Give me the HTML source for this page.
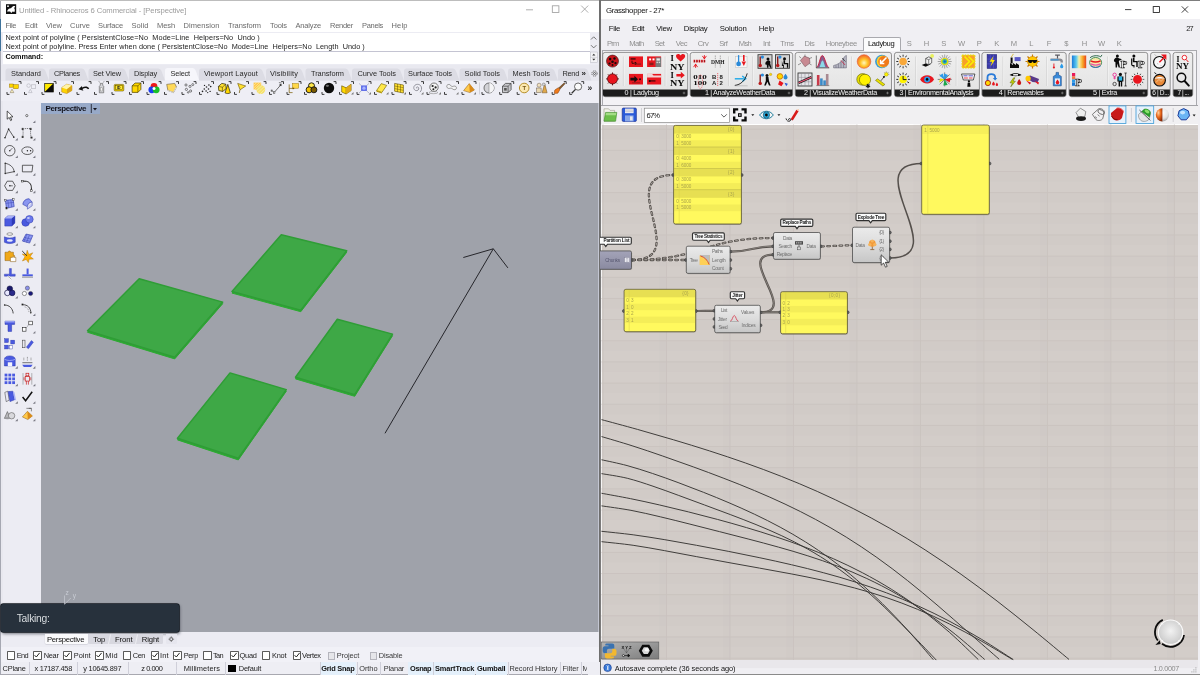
<!DOCTYPE html><html><head><meta charset="utf-8"><title>Rhino + Grasshopper</title><style>
html,body{margin:0;padding:0;}
body{width:1200px;height:675px;overflow:hidden;background:#fff;font-family:"Liberation Sans",sans-serif;position:relative;}
.a{position:absolute;z-index:1;}
.t{position:absolute;white-space:pre;line-height:1;z-index:3;}
svg{position:absolute;overflow:visible;z-index:2;}

</style></head><body>
<div class="a" id="rhino" style="will-change:transform;left:0;top:0;width:600px;height:675px;background:#fff;overflow:hidden;">
<div class="a" style="left:0px;top:0px;width:600px;height:1px;background:#bdbdbd;"></div>
<div class="t" style="left:19px;top:7px;font-size:7.7px;color:#9c9c9c;letter-spacing:-0.108px;">Untitled - Rhinoceros 6 Commercial - [Perspective]</div>
<div class="t" style="left:5.5px;top:22px;font-size:7.5px;color:#6b6b6b;letter-spacing:-0.396px;">File</div>
<div class="t" style="left:25px;top:22px;font-size:7.5px;color:#6b6b6b;letter-spacing:-0.106px;">Edit</div>
<div class="t" style="left:46px;top:22px;font-size:7.5px;color:#6b6b6b;letter-spacing:-0.030px;">View</div>
<div class="t" style="left:70px;top:22px;font-size:7.5px;color:#6b6b6b;letter-spacing:-0.001px;">Curve</div>
<div class="t" style="left:98px;top:22px;font-size:7.5px;color:#6b6b6b;letter-spacing:-0.121px;">Surface</div>
<div class="t" style="left:131.5px;top:22px;font-size:7.5px;color:#6b6b6b;letter-spacing:0.065px;">Solid</div>
<div class="t" style="left:157px;top:22px;font-size:7.5px;color:#6b6b6b;letter-spacing:-0.085px;">Mesh</div>
<div class="t" style="left:183.5px;top:22px;font-size:7.5px;color:#6b6b6b;letter-spacing:0.063px;">Dimension</div>
<div class="t" style="left:228px;top:22px;font-size:7.5px;color:#6b6b6b;letter-spacing:-0.099px;">Transform</div>
<div class="t" style="left:270px;top:22px;font-size:7.5px;color:#6b6b6b;letter-spacing:-0.102px;">Tools</div>
<div class="t" style="left:295.5px;top:22px;font-size:7.5px;color:#6b6b6b;letter-spacing:-0.169px;">Analyze</div>
<div class="t" style="left:330px;top:22px;font-size:7.5px;color:#6b6b6b;letter-spacing:-0.266px;">Render</div>
<div class="t" style="left:362px;top:22px;font-size:7.5px;color:#6b6b6b;letter-spacing:-0.322px;">Panels</div>
<div class="t" style="left:391.5px;top:22px;font-size:7.5px;color:#6b6b6b;letter-spacing:0.144px;">Help</div>
<div class="a" style="left:0px;top:32px;width:600px;height:33px;background:#ececf3;"></div>
<div class="a" style="left:3px;top:33px;width:587px;height:17.5px;background:#fff;"></div>
<div class="a" style="left:3px;top:50.5px;width:587px;height:1px;background:#c4c4d2;"></div>
<div class="a" style="left:3px;top:51.5px;width:587px;height:12px;background:#fff;"></div>
<div class="t" style="left:5.5px;top:34px;font-size:7.3px;color:#1c1c1c;letter-spacing:0.086px;">Next point of polyline ( PersistentClose=No  Mode=Line  Helpers=No  Undo )</div>
<div class="t" style="left:5.5px;top:43px;font-size:7.3px;color:#1c1c1c;letter-spacing:0.048px;">Next point of polyline. Press Enter when done ( PersistentClose=No  Mode=Line  Helpers=No  Length  Undo )</div>
<div class="t" style="left:5.5px;top:53px;font-size:7.3px;color:#111;font-weight:bold;letter-spacing:-0.078px;">Command:</div>
<div class="a" style="left:0px;top:65px;width:600px;height:16px;background:#e9e9f0;"></div>
<div class="a" style="left:0px;top:80.5px;width:600px;height:22px;background:#eeeef5;"></div>
<div class="a" style="left:0px;top:101px;width:41px;height:531px;background:#ececf3;"></div>
<div class="a" style="left:0px;top:101px;width:3px;height:531px;background:#e8e8ef;"></div>
<div class="a" style="left:41px;top:102.5px;width:556.8px;height:529.5px;background:#9fa2aa;"></div>
<div class="a" style="left:597.8px;top:102.5px;width:1.2px;height:529.5px;background:#c3c6d2;"></div>
<div class="a" style="left:41px;top:102.5px;width:59px;height:11.5px;background:#97a9c8;"></div>
<div class="t" style="left:45.5px;top:105px;font-size:8px;color:#15151f;font-weight:bold;letter-spacing:-0.402px;">Perspective</div>
<div class="a" style="left:0px;top:632px;width:600px;height:15px;background:#ececf3;"></div>
<div class="a" style="left:0px;top:647px;width:600px;height:14.5px;background:#f1f1f7;"></div>
<div class="a" style="left:0px;top:661.5px;width:600px;height:13.5px;background:#eeeef4;"></div>
<div class="a" style="left:599px;top:0px;width:1px;height:675px;background:#6e6e6e;"></div>
<div class="a" style="left:0px;top:674px;width:599px;height:1px;background:#a8a8b0;"></div>
<div class="a" style="left:0px;top:1px;width:1px;height:674px;background:#a6a8b2;"></div>
<div class="a" style="left:0px;top:19px;width:1.2px;height:32px;background:#3f739b;"></div>
<svg width="600" height="675" viewBox="0 0 600 675" style="left:0;top:0;">
<g stroke="#9a9a9a" stroke-width=".8" fill="none"><path d="M526 9.8h7"/><rect x="552.3" y="5.8" width="6.6" height="6.6"/><path d="M581.2 5.6l7 7M588.2 5.6l-7 7"/></g>
<g><rect x="6" y="4.2" width="10.2" height="9.8" fill="#111"/><path d="M7 11.5c1-2.5 2.5-3.5 4-3.2 1.5-2.3 3-2.6 4.2-2.2l-1 2.2c.8 1 .8 2.4.2 3.6l-1.8-.4-1.3 1.6-1.2-1.5z" fill="#fff"/><circle cx="8" cy="6.2" r=".9" fill="#fff"/></g>
<g stroke="#555" stroke-width=".8" fill="none"><path d="M591 39.5l2.7-2.7 2.7 2.7M591 45.2l2.7 2.7 2.7-2.7"/></g>
<g><rect x="590.3" y="52" width="7" height="10.6" fill="#f3f3f6" stroke="#b8b8c2" stroke-width=".5"/><path d="M592.2 55.6l1.6-1.8 1.6 1.8zM592.2 58.8l1.6 1.8 1.6-1.8z" fill="#333"/><path d="M590.3 57.3h7" stroke="#b8b8c2" stroke-width=".5"/></g>
<path d="M5.5 80.5 V71.0 Q5.5 68.5 8.0 68.5 H42.5 Q44.5 68.5 45.5 71.0 L49.0 80.5 Z" fill="#dcdce4"/>
<path d="M49 80.5 V71.0 Q49 68.5 51.5 68.5 H82 Q84 68.5 85 71.0 L88.5 80.5 Z" fill="#dcdce4"/>
<path d="M88.5 80.5 V71.0 Q88.5 68.5 91.0 68.5 H122.5 Q124.5 68.5 125.5 71.0 L129.0 80.5 Z" fill="#dcdce4"/>
<path d="M129 80.5 V71.0 Q129 68.5 131.5 68.5 H158.5 Q160.5 68.5 161.5 71.0 L165.0 80.5 Z" fill="#dcdce4"/>
<path d="M165 80.5 V70.5 Q165 68 167.5 68 H192.7 Q194.7 68 195.7 70.5 L199.2 80.5 Z" fill="#f6f6fb"/>
<path d="M199 80.5 V71.0 Q199 68.5 201.5 68.5 H259.5 Q261.5 68.5 262.5 71.0 L266.0 80.5 Z" fill="#dcdce4"/>
<path d="M266 80.5 V71.0 Q266 68.5 268.5 68.5 H299 Q301 68.5 302 71.0 L305.5 80.5 Z" fill="#dcdce4"/>
<path d="M305.5 80.5 V71.0 Q305.5 68.5 308.0 68.5 H345.5 Q347.5 68.5 348.5 71.0 L352.0 80.5 Z" fill="#dcdce4"/>
<path d="M352 80.5 V71.0 Q352 68.5 354.5 68.5 H397.5 Q399.5 68.5 400.5 71.0 L404.0 80.5 Z" fill="#dcdce4"/>
<path d="M404 80.5 V71.0 Q404 68.5 406.5 68.5 H453 Q455 68.5 456 71.0 L459.5 80.5 Z" fill="#dcdce4"/>
<path d="M459.5 80.5 V71.0 Q459.5 68.5 462.0 68.5 H501.5 Q503.5 68.5 504.5 71.0 L508.0 80.5 Z" fill="#dcdce4"/>
<path d="M508 80.5 V71.0 Q508 68.5 510.5 68.5 H551.5 Q553.5 68.5 554.5 71.0 L558.0 80.5 Z" fill="#dcdce4"/>
<path d="M558 80.5 V71.0 Q558 68.5 560.5 68.5 H585 Q587 68.5 588 71.0 L591.5 80.5 Z" fill="#dcdce4"/>
<g fill="none" stroke="#555" stroke-width=".9"><circle cx="594.5" cy="73.5" r="2.6" stroke-dasharray="1.3 .8"/><circle cx="594.5" cy="73.5" r="1"/></g>
<path d="M91.3 104v9" stroke="#15151f" stroke-width=".8"/><path d="M93 108h4l-2 2.6z" fill="#15151f"/>
<g stroke="#555" stroke-width=".7" fill="none"><path d="M168.5 639.2h5.6M171.3 636.4v5.6"/><rect x="170" y="637.9" width="2.6" height="2.6" fill="#e6e6ee"/></g>
<g stroke="#f4f4f8" stroke-width=".8"><path d="M110.500 634.500l-2 9.500M137.500 634.500l-2 9.500"/></g>
<g stroke="#c9ccd4" stroke-width=".7" fill="none"><path d="M64.5 595.5v9M64.8 604l6-6"/></g>
<text x="65.5" y="594.5" font-size="6.5" fill="#c9ccd4">z</text><text x="72.8" y="597.5" font-size="6.5" fill="#c9ccd4">y</text>
<path d="M139.2 280.3 L222.7 303.70000000000005 L174.7 358.90000000000003 L87.5 332.3 Z" fill="#2cab31" stroke="#2cab31" stroke-width="1" stroke-linejoin="round"/>
<path d="M139.2 278.7 L222.7 302.1 L174.7 357.3 L87.5 330.7 Z" fill="#3ea846" stroke="#2f9d36" stroke-width="1.5" stroke-linejoin="round"/>
<path d="M281.3 236.29999999999998 L346.7 252.29999999999998 L300.8 311.70000000000005 L232 293.1 Z" fill="#2cab31" stroke="#2cab31" stroke-width="1" stroke-linejoin="round"/>
<path d="M281.3 234.7 L346.7 250.7 L300.8 310.1 L232 291.5 Z" fill="#3ea846" stroke="#2f9d36" stroke-width="1.5" stroke-linejoin="round"/>
<path d="M337.3 320.8 L392.5 335.70000000000005 L354.7 396.3 L295.5 378.90000000000003 Z" fill="#2cab31" stroke="#2cab31" stroke-width="1" stroke-linejoin="round"/>
<path d="M337.3 319.2 L392.5 334.1 L354.7 394.7 L295.5 377.3 Z" fill="#3ea846" stroke="#2f9d36" stroke-width="1.5" stroke-linejoin="round"/>
<path d="M230 374.5 L286.3 391.20000000000005 L238.3 459.90000000000003 L177.5 439.90000000000003 Z" fill="#2cab31" stroke="#2cab31" stroke-width="1" stroke-linejoin="round"/>
<path d="M230 372.9 L286.3 389.6 L238.3 458.3 L177.5 438.3 Z" fill="#3ea846" stroke="#2f9d36" stroke-width="1.5" stroke-linejoin="round"/>
<g stroke="#26262b" stroke-width="1" fill="none"><path d="M385 433.3 L493.3 248.8"/><path d="M463.3 257.5 L493.3 248.8 L507.9 267.9"/></g>
<path d="M18.6 81.6h2.4v2.4M9.4 94.4h-2.4v-2.4" fill="none" stroke="#111" stroke-width=".8"/>
<g transform="translate(14 88)"><rect x="-4.5" y="-4" width="3.6" height="3.2" fill="#ffd800" stroke="#a07800" stroke-width=".5"/><rect x="-.5" y="-3.3" width="4.8" height="4" fill="#ffd800" stroke="#a07800" stroke-width=".5"/><path d="M-3.8 4.6l1.8-3.4 1.8 3.4z" fill="#fff6c8" stroke="#7a6a4a" stroke-width=".5"/></g>
<path d="M36.1 81.6h2.4v2.4M26.9 94.4h-2.4v-2.4" fill="none" stroke="#111" stroke-width=".8"/>
<g transform="translate(31.5 88)"><circle cx="-2.9" cy="-2.4" r="1.8" fill="none" stroke="#b4b4bc" stroke-width=".6"/><rect x="-.2" y="-3.2" width="4.4" height="3.8" fill="none" stroke="#b4b4bc" stroke-width=".6"/><path d="M-3 4.6l1.8-3.4 1.8 3.4z" fill="none" stroke="#b4b4bc" stroke-width=".6"/></g>
<path d="M53.6 81.6h2.4v2.4M44.4 94.4h-2.4v-2.4" fill="none" stroke="#111" stroke-width=".8"/>
<g transform="translate(49 88)"><rect x="-4.3" y="-4.6" width="8.6" height="8.6" fill="#ffea00" stroke="#111" stroke-width=".7"/><path d="M4.3 -4.6v8.6h-8.6z" fill="#0a0a0a"/></g>
<path d="M71.1 81.6h2.4v2.4M61.9 94.4h-2.4v-2.4" fill="none" stroke="#111" stroke-width=".8"/>
<g transform="translate(66.5 88)"><path d="M-4.8 -.4l5-3.4 5.2 1.4v5l-5.2 3-5-1.6z" fill="#ffd500" stroke="#b07a1c" stroke-width=".5"/><path d="M-4.8 -.4l5.2 1.6 5-3.6-5.2-1.4z" fill="#fff3a8"/><path d="M.4 1.2v4.4l5-3v-5z" fill="#d9a41a"/></g>
<path d="M88.6 81.6h2.4v2.4M79.4 94.4h-2.4v-2.4" fill="none" stroke="#111" stroke-width=".8"/>
<g transform="translate(84 88)"><path d="M-5.6 1.2l3.6-3.3.2 1.7c2.8-1.7 5.4-1.4 7 .9l-1.2.8c-1.4-1.6-3.3-1.6-5.5-.2l.9 1.6z" fill="#111"/></g>
<path d="M106.1 81.6h2.4v2.4M96.9 94.4h-2.4v-2.4" fill="none" stroke="#111" stroke-width=".8"/>
<g transform="translate(101.5 88)"><path d="M-1.4 -5.6l-1.6-1M1.4 -5.6l1.6-1" stroke="#555" stroke-width=".5"/><path d="M-1.2 -4.6h2.4v1.8l1 1v6.6h-4.4v-6.6l1-1z" fill="#d4d4d8" stroke="#555" stroke-width=".6"/><rect x="-1" y="-.2" width="2" height="3.2" fill="#f2f2f2" stroke="#777" stroke-width=".4"/></g>
<path d="M123.6 81.6h2.4v2.4M114.4 94.4h-2.4v-2.4" fill="none" stroke="#111" stroke-width=".8"/>
<g transform="translate(119 88)"><rect x="-4.8" y="-3.6" width="9.6" height="6.6" rx="1" fill="#f2d000" stroke="#6b5a00" stroke-width=".6"/><rect x="-3.4" y="-2.3" width="6.8" height="4" fill="#ffea30" stroke="#3a3000" stroke-width=".4"/><text x="-2.2" y="1.2" font-size="3.8" font-weight="bold" fill="#222">ID</text></g>
<path d="M141.1 81.6h2.4v2.4M131.9 94.4h-2.4v-2.4" fill="none" stroke="#111" stroke-width=".8"/>
<g transform="translate(136.5 88)"><path d="M-4.4 -2.2l3-2.8h5.8v6.4l-3 3h-5.8z" fill="#ffd800" stroke="#4a3c00" stroke-width=".7"/><path d="M-4.4 -2.2h5.8v6.6M1.4 -2.2l3-2.8" fill="none" stroke="#4a3c00" stroke-width=".6"/></g>
<path d="M158.6 81.6h2.4v2.4M149.4 94.4h-2.4v-2.4" fill="none" stroke="#111" stroke-width=".8"/>
<g transform="translate(154 88)"><circle cx="0" cy="-1.6" r="3.4" fill="#f01818"/><circle cx="-2.2" cy="1.8" r="3.4" fill="#1c3cf0"/><circle cx="2.2" cy="1.8" r="3.4" fill="#18c028"/><circle cx="0" cy=".6" r="1.5" fill="#fff"/></g>
<path d="M176.1 81.6h2.4v2.4M166.9 94.4h-2.4v-2.4" fill="none" stroke="#111" stroke-width=".8"/>
<g transform="translate(171.5 88)"><path d="M-4.8 -3.6l8-1 1.8 3.6-3 5.6-5.6-2.2z" fill="#ffd95a" stroke="#6a5a3a" stroke-width=".6"/><path d="M-3.6 2.4l5.4 2.2 3-5.6" fill="none" stroke="#d8d8d8" stroke-width="1"/></g>
<path d="M193.6 81.6h2.4v2.4M184.4 94.4h-2.4v-2.4" fill="none" stroke="#111" stroke-width=".8"/>
<g transform="translate(189 88)"><g fill="none" stroke="#333" stroke-width=".6"><circle cx="-3" cy="-3" r="1.1"/><circle cx="1" cy="-1.6" r="1.1"/><circle cx="3.8" cy="-3.4" r="1"/><circle cx="-2.6" cy="1.4" r="1.1"/><circle cx="1.6" cy="3" r="1.1"/><circle cx="-.8" cy="4.4" r=".8"/></g></g>
<path d="M211.1 81.6h2.4v2.4M201.9 94.4h-2.4v-2.4" fill="none" stroke="#111" stroke-width=".8"/>
<g transform="translate(206.5 88)"><g fill="#222"><circle cx="-4" cy="3.4" r=".8"/><circle cx="-2.2" cy="1" r=".8"/><circle cx="-.4" cy="3" r=".8"/><circle cx="0" cy="-1" r=".8"/><circle cx="2" cy="1" r=".8"/><circle cx="2.4" cy="-3" r=".8"/><circle cx="4.2" cy="-1.4" r=".8"/><circle cx="-2" cy="-2.6" r=".7"/><circle cx="3.6" cy="3.4" r=".7"/><circle cx="1.2" cy="4.6" r=".7"/></g></g>
<path d="M228.6 81.6h2.4v2.4M219.4 94.4h-2.4v-2.4" fill="none" stroke="#111" stroke-width=".8"/>
<g transform="translate(224 88)"><path d="M-5.6 -1.6l3.400-3 4 .8.400 4.400-3.400 2.800-4-.8z" fill="#ffe030" stroke="#2a2200" stroke-width=".7"/><path d="M-5.600 -1.600l4 .8 3.400-3M-1.600 -.8v4.600" fill="none" stroke="#2a2200" stroke-width=".5"/><path d="M1 4.800l2.800-8.400 2.600 8.400c-1.600 1-3.800 1-5.400 0z" fill="#ffd800" stroke="#2a2200" stroke-width=".7"/></g>
<path d="M246.1 81.6h2.4v2.4M236.9 94.4h-2.4v-2.4" fill="none" stroke="#111" stroke-width=".8"/>
<g transform="translate(241.5 88)"><path d="M-3.8 -4.6l8 2.6-5.6 3.8z" fill="#ffe030" stroke="#6a5200" stroke-width=".6"/><path d="M-1.6 1.8l-.6 3.2" stroke="#6a5200" stroke-width=".7"/></g>
<path d="M263.6 81.6h2.4v2.4M254.4 94.4h-2.4v-2.4" fill="none" stroke="#111" stroke-width=".8"/>
<g transform="translate(259 88)"><rect x="-5.400" y="-5.400" width="7.600" height="7" fill="#ffc84a"/><circle cx="1.800" cy="1.600" r="4.400" fill="#f4e06a"/><g stroke="#fff6c0" stroke-width=".55"><path d="M-5.400 -2.600l3-2.800M-5.400 0l5.800-5.400M-5 2l7-6.600M-2.400 2.600l6-5.600M-1.600 5l7-6.600M1 6l5-4.800"/></g></g>
<path d="M281.1 81.6h2.4v2.4M271.9 94.4h-2.4v-2.4" fill="none" stroke="#111" stroke-width=".8"/>
<g transform="translate(276.5 88)"><path d="M-4.6 2.8l2.2 1.8 6.6-7.6" fill="none" stroke="#333" stroke-width=".7"/><g fill="#fff" stroke="#333" stroke-width=".5"><rect x="-5.4" y="2" width="1.6" height="1.6"/><rect x="-3.2" y="3.8" width="1.6" height="1.6"/><rect x="3.4" y="-3.8" width="1.6" height="1.6"/></g><path d="M2.4 -5.4l2.6.4" stroke="#333" stroke-width=".6"/></g>
<path d="M298.6 81.6h2.4v2.4M289.4 94.4h-2.4v-2.4" fill="none" stroke="#111" stroke-width=".8"/>
<g transform="translate(294 88)"><rect x="-1.4" y="-4.4" width="6" height="4.6" fill="#ffd84a" stroke="#a07a00" stroke-width=".5"/><path d="M-4.8 -3.6v8.4M-4.8 .4h5M-4.8 4.6h3.4" stroke="#7a5a00" stroke-width=".7" fill="none"/><path d="M.4 .4l-1.6-1.2v2.4z" fill="#7a5a00"/></g>
<path d="M316.1 81.6h2.4v2.4M306.9 94.4h-2.4v-2.4" fill="none" stroke="#111" stroke-width=".8"/>
<g transform="translate(311.5 88)"><circle cx="0" cy="-2.2" r="3" fill="#ffe84a" stroke="#111" stroke-width=".9"/><circle cx="-2.4" cy="1.8" r="3" fill="#f2c200" stroke="#111" stroke-width=".9"/><circle cx="2.4" cy="1.8" r="3" fill="#7a5a00" stroke="#111" stroke-width=".9"/></g>
<path d="M333.6 81.6h2.4v2.4M324.4 94.4h-2.4v-2.4" fill="none" stroke="#111" stroke-width=".8"/>
<g transform="translate(329 88)"><circle cx="0" cy="0" r="5.2" fill="#0c0c0c"/><ellipse cx="-1.6" cy="-2.2" rx="1.6" ry="1.1" fill="#6a6a6a"/></g>
<path d="M351.1 81.6h2.4v2.4M341.9 94.4h-2.4v-2.4" fill="none" stroke="#111" stroke-width=".8"/>
<g transform="translate(346.5 88)"><path d="M-4.8 -2.2l4.4 2 5-3.6v6.4l-5 3.4-4.4-2z" fill="#ffd800" stroke="#5a4800" stroke-width=".6"/><path d="M-.4 -.2v6.2" stroke="#5a4800" stroke-width=".5"/><path d="M-.4 -.2l5-3.6v6.4l-5 3.4z" fill="#e0a81a"/></g>
<path d="M368.6 81.6h2.4v2.4M359.4 94.4h-2.4v-2.4" fill="none" stroke="#111" stroke-width=".8"/>
<g transform="translate(364 88)"><rect x="-3" y="-2.6" width="6" height="5.6" fill="#4a5ae8" opacity=".85"/><path d="M-5 -4.6l2.4 2.2M5 -4.6l-2.4 2.2M-5 5l2.4-2.2M5 5l-2.4-2.2" stroke="#9aa0b8" stroke-width=".7"/><circle cx="0" cy=".2" r="1.6" fill="#a8b4ff"/></g>
<path d="M386.1 81.6h2.4v2.4M376.9 94.4h-2.4v-2.4" fill="none" stroke="#111" stroke-width=".8"/>
<g transform="translate(381.5 88)"><path d="M-5 2.6l4.8-7 5.4 1.8-4.8 7z" fill="#ffe84a" stroke="#6a5a00" stroke-width=".6"/><path d="M-5 2.6l5.4 1.8v1.2l-5.4-1.8z" fill="#b89a00"/></g>
<path d="M403.6 81.6h2.4v2.4M394.4 94.4h-2.4v-2.4" fill="none" stroke="#111" stroke-width=".8"/>
<g transform="translate(399 88)"><path d="M-4.4 -4.6l8.8 1.6v8l-8.8-1.8z" fill="#ffe030" stroke="#5a4800" stroke-width=".6"/><path d="M-1.5 -4v7.9M1.5 -3.5v7.9M-4.4 -2l8.8 1.7M-4.4 .6l8.8 1.7" stroke="#5a4800" stroke-width=".45" fill="none"/></g>
<path d="M421.1 81.6h2.4v2.4M411.9 94.4h-2.4v-2.4" fill="none" stroke="#111" stroke-width=".8"/>
<g transform="translate(416.5 88)"><path d="M.2 .4c-.8-.8.2-2 1.2-1.4 1.6.8 1 3.4-1 3.6-2.6.3-4-2.6-2.6-4.6 1.6-2.4 5.4-2.2 6.8.4 1 2 .4 4.4-1.2 5.8" fill="none" stroke="#8a8a94" stroke-width=".9"/></g>
<path d="M438.6 81.6h2.4v2.4M429.4 94.4h-2.4v-2.4" fill="none" stroke="#111" stroke-width=".8"/>
<g transform="translate(434 88)"><circle cx="0" cy="-.8" r="4.2" fill="#f4f4f4" stroke="#444" stroke-width=".7"/><circle cx="-1.4" cy="-2" r="1.1" fill="#222"/><circle cx="1.6" cy="-.6" r="1.1" fill="#222"/><circle cx="-.6" cy="1.2" r="1" fill="#222"/><ellipse cx="-.6" cy="4.6" rx="4.4" ry="1.1" fill="none" stroke="#888" stroke-width=".6"/></g>
<path d="M456.1 81.6h2.4v2.4M446.9 94.4h-2.4v-2.4" fill="none" stroke="#111" stroke-width=".8"/>
<g transform="translate(451.5 88)"><path d="M-4.6 -2.6c1-1.4 3-1.2 3.8 0 .8 1.4 2 1.2 3 .8 1.6-.6 3 .6 2.8 2-.3 1.6-2.4 2-3.6 1-1-1-2-1.2-3.2-.8-1.8.6-3.6-1.2-2.8-3z" fill="#f2f2f4" stroke="#777" stroke-width=".7"/></g>
<path d="M473.6 81.6h2.4v2.4M464.4 94.4h-2.4v-2.4" fill="none" stroke="#111" stroke-width=".8"/>
<g transform="translate(469 88)"><path d="M-5.4 2.6l5.6-7 5.2 6.4-4.6 2.6z" fill="#ffc94a" stroke="#8a5a1a" stroke-width=".5"/><path d="M.2 -4.4l5.2 6.4-4.6 2.6z" fill="#d98a1a"/></g>
<path d="M493.6 81.6h2.4v2.4M484.4 94.4h-2.4v-2.4" fill="none" stroke="#111" stroke-width=".8"/>
<g transform="translate(489 88)"><circle cx="0" cy="0" r="5" fill="#d2d2d6" stroke="#555" stroke-width=".8"/><path d="M0 -5a5 5 0 0 1 0 10z" fill="#f4f4f6"/><path d="M0 -5v10" stroke="#777" stroke-width=".5"/></g>
<path d="M511.3 81.6h2.4v2.4M502.1 94.4h-2.4v-2.4" fill="none" stroke="#111" stroke-width=".8"/>
<g transform="translate(506.7 88)"><path d="M-4.2 -1.8l3-2.8h5.6v6.2l-3 3h-5.6z" fill="#c8c8cc" stroke="#333" stroke-width=".7"/><path d="M-4.2 -1.8h5.6v6.4M1.4 -1.8l3-2.8" fill="none" stroke="#333" stroke-width=".6"/><rect x="-2.6" y="0" width="2.6" height="2.6" fill="#555"/></g>
<path d="M528.8 81.6h2.4v2.4M519.6 94.4h-2.4v-2.4" fill="none" stroke="#111" stroke-width=".8"/>
<g transform="translate(524.2 88)"><circle cx="0" cy="0" r="4.8" fill="#fbe8b0" stroke="#b8902a" stroke-width="1"/><text x="-1.7" y="2.2" font-size="6" font-weight="bold" fill="#7a5a1a">T</text></g>
<path d="M546.3 81.6h2.4v2.4M537.1 94.4h-2.4v-2.4" fill="none" stroke="#111" stroke-width=".8"/>
<g transform="translate(541.7 88)"><circle cx="-2.6" cy="-2.8" r="2" fill="#f0e0c0" stroke="#6a5a4a" stroke-width=".5"/><rect x="-5" y="0" width="4.4" height="4.6" fill="#e8d8b0" stroke="#6a5a4a" stroke-width=".5"/><path d="M.4 4.8l2.6-9 2.4 9z" fill="#e0a84a" stroke="#6a4a1a" stroke-width=".5"/><circle cx="2" cy="-3.6" r="1.4" fill="#d8d8d8" stroke="#555" stroke-width=".4"/></g>
<path d="M563.8 81.6h2.4v2.4M554.6 94.4h-2.4v-2.4" fill="none" stroke="#111" stroke-width=".8"/>
<g transform="translate(559.2 88)"><path d="M5 -5.2l.9.9-5.2 5.6-1.4-1.2z" fill="#8a5a2a" stroke="#3a2a1a" stroke-width=".4"/><path d="M-1 -.2l1.8 1.6-2.2 3.8-3.6.2 .6-3.4z" fill="#f07a1a" stroke="#7a3a0a" stroke-width=".5"/></g>
<path d="M581.3 81.6h2.4v2.4M572.1 94.4h-2.4v-2.4" fill="none" stroke="#111" stroke-width=".8"/>
<g transform="translate(576.7 88)"><circle cx="1.4" cy="-1.4" r="3.6" fill="#fafafa" stroke="#444" stroke-width=".8"/><path d="M-1.2 1.4l-3.8 3.8" stroke="#333" stroke-width="1.3"/></g>
<path d="M353.5 94.4h-2.4l2.4-2.4z" fill="#777"/>
<path d="M371 94.4h-2.4l2.4-2.4z" fill="#777"/>
<path d="M388.5 94.4h-2.4l2.4-2.4z" fill="#777"/>
<path d="M406 94.4h-2.4l2.4-2.4z" fill="#777"/>
<path d="M423.5 94.4h-2.4l2.4-2.4z" fill="#777"/>
<path d="M441 94.4h-2.4l2.4-2.4z" fill="#777"/>
<path d="M458.5 94.4h-2.4l2.4-2.4z" fill="#777"/>
<path d="M476 94.4h-2.4l2.4-2.4z" fill="#777"/>
<path d="M479.5 82.5v12" stroke="#c4c4cc" stroke-width=".7"/>
<g transform="translate(9.8 115.6)"><path d="M-2.6 -4.6v8.2l2-1.8 1.4 3.2 1.2-.6-1.4-3 2.6-.2z" fill="#fff" stroke="#111" stroke-width=".7"/></g>
<g transform="translate(27.4 115.6)"><circle cx="-.6" cy="0" r="1.1" fill="#fff" stroke="#222" stroke-width=".6"/></g>
<path d="M35.4 123h-2.6l2.6-2.6z" fill="#7a7a84"/>
<g transform="translate(9.8 133.15)"><path d="M-4.8 4.6l3.6-8.6 5.2 8" fill="none" stroke="#222" stroke-width=".7"/><g fill="#222"><circle cx="-4.8" cy="4.6" r=".8"/><circle cx="-1.2" cy="-4" r=".8"/><circle cx="4" cy="4" r=".8"/></g></g>
<g transform="translate(27.4 133.15)"><path d="M-4.6 -4.2c3-.6 8-.6 8 0M-4.6 3.6c.4-3 .4-5 0-7.8M4 4.6c-1-3-1-6-.6-8.8" fill="none" stroke="#222" stroke-width=".6" stroke-dasharray="1.2 .8"/><g fill="#fff" stroke="#222" stroke-width=".5"><rect x="-5.4" y="-5" width="1.6" height="1.6"/><rect x="2.6" y="-5" width="1.6" height="1.6"/><rect x="-5.4" y="3" width="1.6" height="1.6"/><rect x="3.4" y="3.8" width="1.6" height="1.6"/></g></g>
<path d="M17.8 140.55h-2.6l2.6-2.6z" fill="#7a7a84"/>
<path d="M35.4 140.55h-2.6l2.6-2.6z" fill="#7a7a84"/>
<g transform="translate(9.8 150.7)"><circle cx="0" cy="0" r="5.2" fill="none" stroke="#222" stroke-width=".7"/><path d="M0 0l2.6-2.6" stroke="#222" stroke-width=".6"/><circle cx="0" cy="0" r=".7" fill="#222"/></g>
<g transform="translate(27.4 150.7)"><ellipse cx="0" cy="0" rx="5.6" ry="3.8" fill="none" stroke="#222" stroke-width=".7"/><circle cx="0" cy="0" r=".7" fill="#222"/><circle cx="3.2" cy="0" r=".7" fill="#222"/></g>
<path d="M17.8 158.1h-2.6l2.6-2.6z" fill="#7a7a84"/>
<path d="M35.4 158.1h-2.6l2.6-2.6z" fill="#7a7a84"/>
<g transform="translate(9.8 168.25)"><path d="M-4.6 -5v10.2M-4.6 -5c5 1 8.4 4 9 8.4l-9 1.8" fill="none" stroke="#222" stroke-width=".7"/><g fill="#222"><circle cx="-4.6" cy="-5" r=".7"/><circle cx="-4.6" cy="5.2" r=".7"/><circle cx="4.4" cy="3.4" r=".7"/></g></g>
<g transform="translate(27.4 168.25)"><path d="M-5 -3h10.4l-.8 6.6h-9.6z" fill="none" stroke="#222" stroke-width=".7"/></g>
<path d="M17.8 175.65h-2.6l2.6-2.6z" fill="#7a7a84"/>
<path d="M35.4 175.65h-2.6l2.6-2.6z" fill="#7a7a84"/>
<g transform="translate(9.8 185.8)"><path d="M-2.6 -4.6h5.4l2.6 4.6-2.6 4.6h-5.4l-2.6-4.6z" fill="none" stroke="#222" stroke-width=".7"/><path d="M0 0h3" stroke="#222" stroke-width=".6"/><circle cx="0" cy="0" r=".7" fill="#222"/></g>
<g transform="translate(27.4 185.8)"><path d="M-5 -4.6h2.6c4 0 6.4 2.8 6.4 6.6v3" fill="none" stroke="#222" stroke-width="1"/><g fill="#fff" stroke="#222" stroke-width=".5"><rect x="-5.8" y="-5.4" width="1.6" height="1.6"/><rect x="3.2" y="4" width="1.6" height="1.6"/></g></g>
<path d="M17.8 193.2h-2.6l2.6-2.6z" fill="#7a7a84"/>
<path d="M35.4 193.2h-2.6l2.6-2.6z" fill="#7a7a84"/>
<g transform="translate(9.8 203.35)"><path d="M-4.4 -3l7.8-.8 1 7-7.8 1.8z" fill="#8a96f0" stroke="#2a36a8" stroke-width=".6"/><path d="M-2 -3.3l1 8M1 -3.6l1 7.6M-4 0l8.2-1" stroke="#2a36a8" stroke-width=".4"/><g fill="#fff" stroke="#222" stroke-width=".4"><rect x="-5.2" y="-3.8" width="1.5" height="1.5"/><rect x="2.8" y="-4.6" width="1.5" height="1.5"/><rect x="-4" y="4.2" width="1.5" height="1.5"/></g></g>
<g transform="translate(27.4 203.35)"><path d="M-4.6 1c.4-3.6 3-5.6 6.4-5.6l3 3.4c-3 0-4.6 1.8-4.8 4.6z" fill="#8a96f0" stroke="#2a36a8" stroke-width=".6"/><path d="M0 3.4v2.4l4.8-3.4v-3.6" fill="#c8ccf4" stroke="#2a36a8" stroke-width=".5"/></g>
<path d="M17.8 210.75h-2.6l2.6-2.6z" fill="#7a7a84"/>
<path d="M35.4 210.75h-2.6l2.6-2.6z" fill="#7a7a84"/>
<g transform="translate(9.8 220.9)"><path d="M-5 -2.4l3-2.6h7v7.2l-3 3h-7z" fill="#4a5ae0" stroke="#2a36a8" stroke-width=".5"/><path d="M-5 -2.4h7l3-2.6h-7z" fill="#a8b0f8"/><path d="M2 -2.4v7.6l3-3v-7.2z" fill="#2e3ab8"/></g>
<g transform="translate(27.4 220.9)"><circle cx="-1.8" cy="1.6" r="3.8" fill="#4a5ae0" stroke="#2a36a8" stroke-width=".5"/><circle cx="2" cy="-1.6" r="3.8" fill="#6a78ec" stroke="#2a36a8" stroke-width=".5"/><ellipse cx="1" cy="-2.8" rx="1.4" ry="1" fill="#c4caf8"/></g>
<path d="M17.8 228.3h-2.6l2.6-2.6z" fill="#7a7a84"/>
<path d="M35.4 228.3h-2.6l2.6-2.6z" fill="#7a7a84"/>
<g transform="translate(9.8 238.45)"><ellipse cx="0" cy="-4.4" rx="3" ry="1.2" fill="#fff" stroke="#333" stroke-width=".5"/><path d="M-5.4 -1.6c3.4 1.6 7.4 1.6 10.8 0v5.4c-3.4 1.8-7.4 1.8-10.8 0z" fill="#4a5ae0" stroke="#2a36a8" stroke-width=".5"/><ellipse cx="0" cy="2" rx="3" ry="1.3" fill="#e8eaff"/></g>
<g transform="translate(27.4 238.45)"><path d="M-5 2.6l3.6-7 6.8 1.4-3.2 7.6z" fill="#8a96f0" stroke="#2a36a8" stroke-width=".6"/><path d="M-3.2 -1l6.8 1.6M-4.2 1l6.8 1.8M-.6 -4l-3 7.4M2 -3.4l-3 7.6" stroke="#2a36a8" stroke-width=".4"/></g>
<path d="M17.8 245.85h-2.6l2.6-2.6z" fill="#7a7a84"/>
<path d="M35.4 245.85h-2.6l2.6-2.6z" fill="#7a7a84"/>
<g transform="translate(9.8 256)"><path d="M-4.8 -3.8h3.4c-.6-1.6 2.6-1.6 2 0h3v3c1.6-.6 1.6 2.6 0 2v3.4h-8.400z" fill="#f0a818" stroke="#8a5a0a" stroke-width=".5"/><path d="M.6 1.4h2c-.4-1.2 1.8-1.2 1.4 0h2v4.200h-5.400z" fill="#fff" stroke="#8a5a0a" stroke-width=".5"/></g>
<g transform="translate(27.4 256)"><path d="M-5 5l2.6-4.400-2.800-2.600 4 .6 1-4.400 1.600 4.200 4-1.600-2.600 3.600 3.200 2.600-4.400.2-.6 3.400-2.200-3.200z" fill="#ffb000" stroke="#a86a00" stroke-width=".4"/><path d="M-5.2 -5l4.800 4.800" stroke="#222" stroke-width=".9"/></g>
<g transform="translate(9.8 273.55)"><path d="M-5.4 .6h5v-5.6h2v5.600h3.800v2h-10.800z" fill="#4a5ae0" stroke="#2a36a8" stroke-width=".4"/><path d="M-2 2.600l3.600 3" stroke="#fff" stroke-width="1.600"/><path d="M-2 2.600l3.600 3" stroke="#555" stroke-width=".5"/></g>
<g transform="translate(27.4 273.55)"><path d="M-5 .8h10.400v1.800h-10.400z" fill="#4a5ae0"/><path d="M-.8 -5h2v5.800h-2z" fill="#4a5ae0"/><path d="M-5.400 3.600h11" stroke="#333" stroke-width=".5"/></g>
<g transform="translate(9.8 291.1)"><circle cx="0" cy="-2.400" r="2.800" fill="#1a1a6a" stroke="#0a0a3a" stroke-width=".5"/><circle cx="-2.400" cy="1.800" r="2.800" fill="#e8e8ff" stroke="#0a0a3a" stroke-width=".7"/><circle cx="2.400" cy="1.800" r="2.800" fill="#2a2a8a" stroke="#0a0a3a" stroke-width=".5"/></g>
<g transform="translate(27.4 291.1)"><circle cx="0" cy="-3" r="2.100" fill="#8a90e8" stroke="#333" stroke-width=".4"/><circle cx="-3" cy="2.400" r="2.100" fill="#fff" stroke="#333" stroke-width=".5"/><circle cx="3.200" cy="2.400" r="2.100" fill="#1a1a7a" stroke="#333" stroke-width=".4"/></g>
<path d="M17.8 298.5h-2.6l2.6-2.6z" fill="#7a7a84"/>
<g transform="translate(9.8 308.65)"><path d="M-5.200 -3.600c4.600 0 8 3 8.600 8.400" fill="none" stroke="#222" stroke-width=".8"/><circle cx="-5.200" cy="-3.600" r=".7" fill="#222"/></g>
<g transform="translate(27.4 308.65)"><path d="M-4.800 -4c5 0 8 3 8.400 8.400" fill="none" stroke="#222" stroke-width=".8"/><path d="M-2.800 -1.800c2.600.6 4 2.400 4.400 5.400" fill="none" stroke="#777" stroke-width=".6" stroke-dasharray="1.200 .800"/><g fill="#fff" stroke="#222" stroke-width=".4"><rect x="-5.600" y="-4.800" width="1.500" height="1.500"/><rect x="2.800" y="3.600" width="1.500" height="1.500"/></g></g>
<path d="M35.4 316.05h-2.6l2.6-2.6z" fill="#7a7a84"/>
<g transform="translate(9.8 326.2)"><path d="M-4.800 -5h9.600v3.200h-3v7h-3.600v-7h-3z" fill="#4a5ae0" stroke="#2a36a8" stroke-width=".5"/><path d="M-4.800 -5h9.600v1.200h-9.600z" fill="#a8b0f8"/></g>
<g transform="translate(27.4 326.2)"><g fill="#fff" stroke="#222" stroke-width=".6"><rect x="-5" y="1.400" width="3.600" height="3.600"/><rect x="1.400" y="-5" width="3.600" height="3.600"/></g><path d="M-1.400 1.400l2.800-2.800" stroke="#222" stroke-width=".5" stroke-dasharray="1 .700"/></g>
<path d="M35.4 333.6h-2.6l2.6-2.6z" fill="#7a7a84"/>
<g transform="translate(9.8 343.75)"><g fill="#4a5ae0" stroke="#2a36a8" stroke-width=".4"><rect x="-5.200" y="-5" width="3.800" height="3.800"/><rect x="1" y="-3.600" width="3.800" height="3.800"/><rect x="-5.200" y="1.400" width="3.800" height="3.800"/><rect x="-.4" y="2" width="3.200" height="3.200" fill="#fff"/></g></g>
<g transform="translate(27.4 343.75)"><rect x="-5" y="-3.600" width="2.600" height="7.600" fill="#e8e8f0" stroke="#333" stroke-width=".5"/><path d="M-1 3.400l5-6.600 2 1.600-5 6.600z" fill="#4a5ae0" stroke="#2a36a8" stroke-width=".4"/></g>
<g transform="translate(9.8 361.3)"><path d="M-5.400 -2c0-2 2-3.400 5.400-3.400s5.400 1.400 5.400 3.400v6.600h-10.800z" fill="#4a5ae0" stroke="#2a36a8" stroke-width=".5"/><path d="M-5.400 -2c3 1.600 7.800 1.600 10.800 0" fill="none" stroke="#a8b0f8" stroke-width=".8"/><rect x="-2" y="1" width="4.400" height="4" fill="#f4f4ff"/></g>
<g transform="translate(27.4 361.3)"><path d="M-5.200 3.400h10.400l-1.600 2.200h-7.200z" fill="#4a5ae0"/><path d="M-5 1.400h10" stroke="#222" stroke-width=".6"/><path d="M-3.600 -3.600v3M0 -4.400v3.800M3.600 -3.600v3" stroke="#555" stroke-width=".6" stroke-dasharray="1 .600"/></g>
<path d="M17.8 368.7h-2.6l2.6-2.6z" fill="#7a7a84"/>
<path d="M35.4 368.7h-2.6l2.6-2.6z" fill="#7a7a84"/>
<g transform="translate(9.8 378.85)"><g fill="#4a5ae0"><rect x="-5.200" y="-5.200" width="2.800" height="2.800"/><rect x="-1.400" y="-5.200" width="2.800" height="2.800"/><rect x="2.400" y="-5.200" width="2.800" height="2.800"/><rect x="-5.200" y="-1.400" width="2.800" height="2.800"/><rect x="-1.400" y="-1.400" width="2.800" height="2.800"/><rect x="2.400" y="-1.400" width="2.800" height="2.800"/><rect x="-5.200" y="2.400" width="2.800" height="2.800"/><rect x="-1.400" y="2.400" width="2.800" height="2.800"/><rect x="2.400" y="2.400" width="2.800" height="2.800"/></g></g>
<g transform="translate(27.4 378.85)"><g fill="none" stroke="#c81a1a" stroke-width=".7"><rect x="-1.400" y="-5.600" width="2.800" height="2.600"/><rect x="-2.200" y="-2.400" width="4.400" height="4.600"/><path d="M-1 2.200v3.600M1 2.200v3.600M-3.400 -1.600v3M3.400 -1.600v3"/></g><path d="M-4.400 -5.800v11.600M4.400 -5.800v11.600" stroke="#555" stroke-width=".4"/></g>
<path d="M17.8 386.25h-2.6l2.6-2.6z" fill="#7a7a84"/>
<path d="M35.4 386.25h-2.6l2.6-2.6z" fill="#7a7a84"/>
<g transform="translate(9.8 396.4)"><path d="M-5 -4l3-1.200 1.400 9-3 1.400z" fill="#e8e8f4" stroke="#333" stroke-width=".5"/><path d="M-1.600 -4.800l4.600-.4 1.800 8.600-4.600 1.800z" fill="#4a5ae0" stroke="#2a36a8" stroke-width=".5"/><path d="M3 -5.200l1.600 1 1.800 8.400-1.600-.8z" fill="#a8b0f8"/></g>
<g transform="translate(27.4 396.4)"><path d="M-4.800 .6l3 3.800 6.600-9" fill="none" stroke="#111" stroke-width="1.500"/></g>
<path d="M17.8 403.8h-2.6l2.6-2.6z" fill="#7a7a84"/>
<path d="M35.4 403.8h-2.6l2.6-2.6z" fill="#7a7a84"/>
<g transform="translate(9.8 413.95)"><path d="M-5.400 4.400l3-6.800 3 6.800z" fill="#b8b8bc" stroke="#444" stroke-width=".5"/><circle cx="1.800" cy="1.800" r="3.200" fill="#d8d8dc" stroke="#444" stroke-width=".5"/><ellipse cx="-2.400" cy="4.400" rx="3" ry="1" fill="#9a9a9e"/></g>
<g transform="translate(27.4 413.95)"><path d="M-5 3l5-5.600 5 4.600-4.600 3.600z" fill="#ffc94a" stroke="#8a5a1a" stroke-width=".5"/><path d="M0 -2.600l5 4.600-4.600 3.600z" fill="#d98a1a"/><path d="M-1 -5.600h5v3M4 -5.600l-2.600 0" fill="none" stroke="#444" stroke-width=".6"/></g>
<path d="M17.8 421.35h-2.6l2.6-2.6z" fill="#7a7a84"/>
<path d="M35.4 421.35h-2.6l2.6-2.6z" fill="#7a7a84"/>
</svg>
<div class="t" style="left:11px;top:70px;font-size:7.4px;color:#2a2a2a;letter-spacing:-0.004px;">Standard</div>
<div class="t" style="left:54px;top:70px;font-size:7.4px;color:#2a2a2a;letter-spacing:-0.282px;">CPlanes</div>
<div class="t" style="left:93px;top:70px;font-size:7.4px;color:#2a2a2a;letter-spacing:-0.134px;">Set View</div>
<div class="t" style="left:134px;top:70px;font-size:7.4px;color:#2a2a2a;letter-spacing:-0.180px;">Display</div>
<div class="t" style="left:170.5px;top:70px;font-size:7.4px;color:#2a2a2a;letter-spacing:-0.178px;">Select</div>
<div class="t" style="left:204px;top:70px;font-size:7.4px;color:#2a2a2a;letter-spacing:0.071px;">Viewport Layout</div>
<div class="t" style="left:270px;top:70px;font-size:7.4px;color:#2a2a2a;letter-spacing:0.141px;">Visibility</div>
<div class="t" style="left:311px;top:70px;font-size:7.4px;color:#2a2a2a;letter-spacing:-0.049px;">Transform</div>
<div class="t" style="left:357.5px;top:70px;font-size:7.4px;color:#2a2a2a;letter-spacing:-0.040px;">Curve Tools</div>
<div class="t" style="left:408px;top:70px;font-size:7.4px;color:#2a2a2a;letter-spacing:-0.054px;">Surface Tools</div>
<div class="t" style="left:464.5px;top:70px;font-size:7.4px;color:#2a2a2a;letter-spacing:-0.014px;">Solid Tools</div>
<div class="t" style="left:512.5px;top:70px;font-size:7.4px;color:#2a2a2a;letter-spacing:0.021px;">Mesh Tools</div>
<div class="t" style="left:562.5px;top:70px;font-size:7.4px;color:#2a2a2a;letter-spacing:-0.298px;">Rend</div>
<div class="t" style="left:581.5px;top:70px;font-size:8px;color:#222;font-weight:bold;">»</div>
<div class="t" style="left:587.5px;top:84px;font-size:8.5px;color:#222;font-weight:bold;">»</div>
<div class="a" style="left:1.3px;top:604.2px;width:178px;height:27.5px;background:#27313c;border-radius:2.5px;box-shadow:0 0 0 .8px #141a21, 1px 1.5px 3px rgba(30,35,45,.55);"></div>
<div class="t" style="left:16.7px;top:614px;font-size:10.3px;color:#d9dde0;letter-spacing:-0.240px;">Talking:</div>
<div class="a" style="left:88px;top:634px;width:74.5px;height:10px;background:#d8d8e0;border-radius:0 0 1.5px 1.5px;"></div>
<div class="a" style="left:45px;top:634px;width:42.5px;height:10px;background:#fafafc;border-radius:0 0 1.5px 1.5px;box-shadow:0 .5px 0 .3px #cfcfd9;"></div>
<div class="t" style="left:47px;top:636px;font-size:7.7px;color:#111;letter-spacing:-0.275px;">Perspective</div>
<div class="t" style="left:93.3px;top:636px;font-size:7.7px;color:#111;letter-spacing:-0.238px;">Top</div>
<div class="t" style="left:115px;top:636px;font-size:7.7px;color:#111;letter-spacing:-0.094px;">Front</div>
<div class="t" style="left:141.7px;top:636px;font-size:7.7px;color:#111;letter-spacing:-0.095px;">Right</div>
<div class="a" style="left:165.5px;top:634px;width:11.5px;height:10px;background:#e6e6ee;border-radius:0 0 1.500px 1.500px;"></div>
<div class="a" style="left:6.7px;top:651.2px;width:6.6px;height:6.8px;background:#fff;border:.7px solid #5a5a5a;border-radius:.8px;"></div>
<div class="t" style="left:16.7px;top:652px;font-size:7.4px;color:#222;letter-spacing:-0.622px;">End</div>
<div class="a" style="left:33.3px;top:651.2px;width:6.6px;height:6.8px;background:#fff;border:.7px solid #5a5a5a;border-radius:.8px;"></div>
<svg width="8" height="8" viewBox="0 0 8 8" style="left:33.3px;top:651.2px;"><path d="M1.6 4.2 L3.3 6 L6.6 1.9" fill="none" stroke="#222" stroke-width="1"/></svg>
<div class="t" style="left:43.7px;top:652px;font-size:7.4px;color:#222;letter-spacing:-0.260px;">Near</div>
<div class="a" style="left:63.3px;top:651.2px;width:6.6px;height:6.8px;background:#fff;border:.7px solid #5a5a5a;border-radius:.8px;"></div>
<svg width="8" height="8" viewBox="0 0 8 8" style="left:63.3px;top:651.2px;"><path d="M1.6 4.2 L3.3 6 L6.6 1.9" fill="none" stroke="#222" stroke-width="1"/></svg>
<div class="t" style="left:73.8px;top:652px;font-size:7.4px;color:#222;letter-spacing:-0.033px;">Point</div>
<div class="a" style="left:95.3px;top:651.2px;width:6.6px;height:6.8px;background:#fff;border:.7px solid #5a5a5a;border-radius:.8px;"></div>
<svg width="8" height="8" viewBox="0 0 8 8" style="left:95.3px;top:651.2px;"><path d="M1.6 4.2 L3.3 6 L6.6 1.9" fill="none" stroke="#222" stroke-width="1"/></svg>
<div class="t" style="left:105.3px;top:652px;font-size:7.4px;color:#222;letter-spacing:0.259px;">Mid</div>
<div class="a" style="left:122.5px;top:651.2px;width:6.6px;height:6.8px;background:#fff;border:.7px solid #5a5a5a;border-radius:.8px;"></div>
<div class="t" style="left:132.8px;top:652px;font-size:7.4px;color:#222;letter-spacing:-0.458px;">Cen</div>
<div class="a" style="left:150.5px;top:651.2px;width:6.6px;height:6.8px;background:#fff;border:.7px solid #5a5a5a;border-radius:.8px;"></div>
<svg width="8" height="8" viewBox="0 0 8 8" style="left:150.5px;top:651.2px;"><path d="M1.6 4.2 L3.3 6 L6.6 1.9" fill="none" stroke="#222" stroke-width="1"/></svg>
<div class="t" style="left:160px;top:652px;font-size:7.4px;color:#222;letter-spacing:0.158px;">Int</div>
<div class="a" style="left:173.3px;top:651.2px;width:6.6px;height:6.8px;background:#fff;border:.7px solid #5a5a5a;border-radius:.8px;"></div>
<svg width="8" height="8" viewBox="0 0 8 8" style="left:173.3px;top:651.2px;"><path d="M1.6 4.2 L3.3 6 L6.6 1.9" fill="none" stroke="#222" stroke-width="1"/></svg>
<div class="t" style="left:183.7px;top:652px;font-size:7.4px;color:#222;letter-spacing:-0.333px;">Perp</div>
<div class="a" style="left:203px;top:651.2px;width:6.6px;height:6.8px;background:#fff;border:.7px solid #5a5a5a;border-radius:.8px;"></div>
<div class="t" style="left:213px;top:652px;font-size:7.4px;color:#222;letter-spacing:-0.644px;">Tan</div>
<div class="a" style="left:230px;top:651.2px;width:6.6px;height:6.8px;background:#fff;border:.7px solid #5a5a5a;border-radius:.8px;"></div>
<svg width="8" height="8" viewBox="0 0 8 8" style="left:230px;top:651.2px;"><path d="M1.6 4.2 L3.3 6 L6.6 1.9" fill="none" stroke="#222" stroke-width="1"/></svg>
<div class="t" style="left:239.5px;top:652px;font-size:7.4px;color:#222;letter-spacing:-0.226px;">Quad</div>
<div class="a" style="left:261.7px;top:651.2px;width:6.6px;height:6.8px;background:#fff;border:.7px solid #5a5a5a;border-radius:.8px;"></div>
<div class="t" style="left:272px;top:652px;font-size:7.4px;color:#222;letter-spacing:-0.256px;">Knot</div>
<div class="a" style="left:292.5px;top:651.2px;width:6.6px;height:6.8px;background:#fff;border:.7px solid #5a5a5a;border-radius:.8px;"></div>
<svg width="8" height="8" viewBox="0 0 8 8" style="left:292.5px;top:651.2px;"><path d="M1.6 4.2 L3.3 6 L6.6 1.9" fill="none" stroke="#222" stroke-width="1"/></svg>
<div class="t" style="left:302px;top:652px;font-size:7.4px;color:#222;letter-spacing:-0.380px;">Vertex</div>
<div class="a" style="left:327.5px;top:652px;width:5.4px;height:5.6px;background:#e6e6ea;border:.6px solid #b5b5bd;"></div>
<div class="t" style="left:336.7px;top:652px;font-size:7.4px;color:#3a3a3a;letter-spacing:-0.076px;">Project</div>
<div class="a" style="left:370px;top:652px;width:5.4px;height:5.6px;background:#e6e6ea;border:.6px solid #b5b5bd;"></div>
<div class="t" style="left:378.7px;top:652px;font-size:7.4px;color:#3a3a3a;letter-spacing:-0.126px;">Disable</div>
<div class="a" style="left:28.7px;top:662px;width:0.7px;height:13px;background:#cfcfd9;"></div>
<div class="a" style="left:77px;top:662px;width:0.7px;height:13px;background:#cfcfd9;"></div>
<div class="a" style="left:127.5px;top:662px;width:0.7px;height:13px;background:#cfcfd9;"></div>
<div class="a" style="left:176.3px;top:662px;width:0.7px;height:13px;background:#cfcfd9;"></div>
<div class="a" style="left:225px;top:662px;width:0.7px;height:13px;background:#cfcfd9;"></div>
<div class="a" style="left:320px;top:662px;width:0.7px;height:13px;background:#cfcfd9;"></div>
<div class="a" style="left:356.5px;top:662px;width:0.7px;height:13px;background:#cfcfd9;"></div>
<div class="a" style="left:380px;top:662px;width:0.7px;height:13px;background:#cfcfd9;"></div>
<div class="a" style="left:407.5px;top:662px;width:0.7px;height:13px;background:#cfcfd9;"></div>
<div class="a" style="left:433px;top:662px;width:0.7px;height:13px;background:#cfcfd9;"></div>
<div class="a" style="left:475.5px;top:662px;width:0.7px;height:13px;background:#cfcfd9;"></div>
<div class="a" style="left:507.5px;top:662px;width:0.7px;height:13px;background:#cfcfd9;"></div>
<div class="a" style="left:560px;top:662px;width:0.7px;height:13px;background:#cfcfd9;"></div>
<div class="a" style="left:580.5px;top:662px;width:0.7px;height:13px;background:#cfcfd9;"></div>
<div class="a" style="left:320.7px;top:662px;width:35.8px;height:13px;background:#e4f0fb;"></div>
<div class="a" style="left:408.2px;top:662px;width:24.8px;height:13px;background:#e4f0fb;"></div>
<div class="a" style="left:433.7px;top:662px;width:41.8px;height:13px;background:#e4f0fb;"></div>
<div class="a" style="left:476.2px;top:662px;width:31.3px;height:13px;background:#e4f0fb;"></div>
<div class="t" style="left:2.5px;top:665px;font-size:7.4px;color:#222;letter-spacing:-0.162px;">CPlane</div>
<div class="t" style="left:34.5px;top:665px;font-size:7.4px;color:#222;letter-spacing:-0.294px;">x 17187.458</div>
<div class="t" style="left:83.3px;top:665px;font-size:7.4px;color:#222;letter-spacing:-0.249px;">y 10645.897</div>
<div class="t" style="left:141.3px;top:665px;font-size:7.4px;color:#222;letter-spacing:-0.439px;">z 0.000</div>
<div class="t" style="left:183.7px;top:665px;font-size:7.4px;color:#222;letter-spacing:0.086px;">Millimeters</div>
<div class="a" style="left:228px;top:665px;width:8.2px;height:7.2px;background:#000;"></div>
<div class="t" style="left:238.7px;top:665px;font-size:7.4px;color:#222;letter-spacing:-0.135px;">Default</div>
<div class="t" style="left:321.2px;top:665px;font-size:7.4px;color:#111;font-weight:bold;letter-spacing:-0.229px;">Grid Snap</div>
<div class="t" style="left:359.2px;top:665px;font-size:7.4px;color:#333;letter-spacing:-0.041px;">Ortho</div>
<div class="t" style="left:383.7px;top:665px;font-size:7.4px;color:#333;letter-spacing:-0.148px;">Planar</div>
<div class="t" style="left:410px;top:665px;font-size:7.4px;color:#111;font-weight:bold;letter-spacing:-0.366px;">Osnap</div>
<div class="t" style="left:435px;top:665px;font-size:7.4px;color:#111;font-weight:bold;letter-spacing:-0.111px;">SmartTrack</div>
<div class="t" style="left:477px;top:665px;font-size:7.4px;color:#111;font-weight:bold;letter-spacing:-0.158px;">Gumball</div>
<div class="t" style="left:509.5px;top:665px;font-size:7.4px;color:#333;letter-spacing:-0.067px;">Record History</div>
<div class="t" style="left:562.5px;top:665px;font-size:7.4px;color:#333;letter-spacing:-0.041px;">Filter</div>
<div class="t" style="left:582.5px;top:665px;font-size:7.4px;color:#333;width:4.6px;overflow:hidden;">M</div>
<div class="a" style="left:587.5px;top:661.5px;width:12.5px;height:13.5px;background:#eeeef4;"></div>
</div>
<div class="a" id="gh" style="will-change:transform;left:600px;top:0;width:600px;height:675px;background:#fff;overflow:hidden;">
<div class="a" style="left:0px;top:0px;width:600px;height:1px;background:#7d7d7d;"></div>
<div class="t" style="left:6px;top:7px;font-size:7.9px;color:#111;letter-spacing:-0.385px;">Grasshopper - 27*</div>
<div class="a" style="left:1px;top:19px;width:599px;height:86px;background:#f0eff3;"></div>
<div class="t" style="left:8.7px;top:25px;font-size:7.8px;color:#111;letter-spacing:-0.317px;">File</div>
<div class="t" style="left:32px;top:25px;font-size:7.8px;color:#111;letter-spacing:-0.310px;">Edit</div>
<div class="t" style="left:56.3px;top:25px;font-size:7.8px;color:#111;letter-spacing:-0.341px;">View</div>
<div class="t" style="left:83.8px;top:25px;font-size:7.8px;color:#111;letter-spacing:-0.268px;">Display</div>
<div class="t" style="left:119.7px;top:25px;font-size:7.8px;color:#111;letter-spacing:-0.148px;">Solution</div>
<div class="t" style="left:158.8px;top:25px;font-size:7.8px;color:#111;letter-spacing:-0.160px;">Help</div>
<div class="t" style="left:586.2px;top:25px;font-size:7.4px;color:#222;letter-spacing:-0.716px;">27</div>
<div class="t" style="left:7px;top:40px;font-size:7.6px;color:#8e8e8e;letter-spacing:-0.744px;">Prm</div>
<div class="t" style="left:29.2px;top:40px;font-size:7.6px;color:#8e8e8e;letter-spacing:-0.599px;">Math</div>
<div class="t" style="left:54.7px;top:40px;font-size:7.6px;color:#8e8e8e;letter-spacing:-0.636px;">Set</div>
<div class="t" style="left:75.8px;top:40px;font-size:7.6px;color:#8e8e8e;letter-spacing:-0.492px;">Vec</div>
<div class="t" style="left:97.8px;top:40px;font-size:7.6px;color:#8e8e8e;letter-spacing:-0.440px;">Crv</div>
<div class="t" style="left:119.2px;top:40px;font-size:7.6px;color:#8e8e8e;letter-spacing:-0.471px;">Srf</div>
<div class="t" style="left:138.7px;top:40px;font-size:7.6px;color:#8e8e8e;letter-spacing:-0.619px;">Msh</div>
<div class="t" style="left:163px;top:40px;font-size:7.6px;color:#8e8e8e;letter-spacing:-0.483px;">Int</div>
<div class="t" style="left:180.3px;top:40px;font-size:7.6px;color:#8e8e8e;letter-spacing:-0.355px;">Trns</div>
<div class="t" style="left:204.5px;top:40px;font-size:7.6px;color:#8e8e8e;letter-spacing:-0.326px;">Dis</div>
<div class="t" style="left:225.7px;top:40px;font-size:7.6px;color:#8e8e8e;letter-spacing:-0.456px;">Honeybee</div>
<div class="t" style="left:306.7px;top:40px;font-size:7.6px;color:#8e8e8e;letter-spacing:-0.569px;">S</div>
<div class="t" style="left:323.7px;top:40px;font-size:7.6px;color:#8e8e8e;letter-spacing:-0.489px;">H</div>
<div class="t" style="left:341.2px;top:40px;font-size:7.6px;color:#8e8e8e;letter-spacing:0.431px;">S</div>
<div class="t" style="left:358px;top:40px;font-size:7.6px;color:#8e8e8e;letter-spacing:0.327px;">W</div>
<div class="t" style="left:376.7px;top:40px;font-size:7.6px;color:#8e8e8e;letter-spacing:-0.569px;">P</div>
<div class="t" style="left:394.2px;top:40px;font-size:7.6px;color:#8e8e8e;letter-spacing:-0.069px;">K</div>
<div class="t" style="left:410.7px;top:40px;font-size:7.6px;color:#8e8e8e;letter-spacing:-0.031px;">M</div>
<div class="t" style="left:429.2px;top:40px;font-size:7.6px;color:#8e8e8e;letter-spacing:-0.927px;">L</div>
<div class="t" style="left:446.7px;top:40px;font-size:7.6px;color:#8e8e8e;letter-spacing:-0.642px;">F</div>
<div class="t" style="left:464.2px;top:40px;font-size:7.6px;color:#8e8e8e;letter-spacing:-0.227px;">$</div>
<div class="t" style="left:481.7px;top:40px;font-size:7.6px;color:#8e8e8e;letter-spacing:-0.489px;">H</div>
<div class="t" style="left:498px;top:40px;font-size:7.6px;color:#8e8e8e;letter-spacing:0.527px;">W</div>
<div class="t" style="left:516.7px;top:40px;font-size:7.6px;color:#8e8e8e;letter-spacing:-0.069px;">K</div>
<div class="a" style="left:1.5px;top:50px;width:595px;height:55.5px;background:#f3f2f5;border:.8px solid #a9a9ae;box-sizing:border-box;"></div>
<div class="a" style="left:263px;top:36.5px;width:38px;height:14.5px;background:#fbfbfc;border:.8px solid #a9a9ae;border-bottom:none;box-sizing:border-box;border-radius:2px 2px 0 0;"></div>
<div class="t" style="left:268px;top:40px;font-size:7.6px;color:#111;letter-spacing:-0.423px;">Ladybug</div>
<div class="a" style="left:1px;top:104.6px;width:599px;height:1px;background:#a3a3a8;"></div>
<div class="a" style="left:1px;top:105.6px;width:599px;height:18.9px;background:#f1f0f2;"></div>
<div class="a" style="left:1.5px;top:124.5px;width:596.5px;height:535.5px;background:#d3cdc9;"></div>
<div class="a" style="left:1px;top:660px;width:599px;height:15px;background:#f0eff3;"></div>
<div class="a" style="left:598px;top:105px;width:2px;height:555px;background:#f0eff3;"></div>
<div class="t" style="left:14.7px;top:665px;font-size:7.4px;color:#111;letter-spacing:-0.034px;">Autosave complete (36 seconds ago)</div>
<div class="t" style="left:553.5px;top:665px;font-size:7.2px;color:#8a8a8a;letter-spacing:-0.316px;">1.0.0007</div>
<svg width="600" height="675" viewBox="600 0 600 675" style="left:0;top:0;">
<g stroke="#111" stroke-width=".8" fill="none"><path d="M1125 9.6h6.4"/><rect x="1153.2" y="6.6" width="6.2" height="5.8"/><path d="M1181.8 6.4l6.2 6.2M1188 6.4l-6.2 6.2"/></g>
<g>
<rect x="596" y="124.5" width="7" height="535.5" fill="#c9c2be" opacity=".16"/>
<rect x="659.48" y="124.5" width="7" height="535.5" fill="#c9c2be" opacity=".16"/>
<rect x="722.96" y="124.5" width="7" height="535.5" fill="#c9c2be" opacity=".16"/>
<rect x="786.44" y="124.5" width="7" height="535.5" fill="#c9c2be" opacity=".16"/>
<rect x="849.92" y="124.5" width="7" height="535.5" fill="#c9c2be" opacity=".16"/>
<rect x="913.4" y="124.5" width="7" height="535.5" fill="#c9c2be" opacity=".16"/>
<rect x="976.88" y="124.5" width="7" height="535.5" fill="#c9c2be" opacity=".16"/>
<rect x="1040.36" y="124.5" width="7" height="535.5" fill="#c9c2be" opacity=".16"/>
<rect x="1103.84" y="124.5" width="7" height="535.5" fill="#c9c2be" opacity=".16"/>
<rect x="1167.32" y="124.5" width="7" height="535.5" fill="#c9c2be" opacity=".16"/>
<rect x="601.5" y="129.1" width="596.5" height="10" fill="#c9c2be" opacity=".16"/>
<rect x="601.5" y="150.26" width="596.5" height="10" fill="#c9c2be" opacity=".16"/>
<rect x="601.5" y="171.42" width="596.5" height="10" fill="#c9c2be" opacity=".16"/>
<rect x="601.5" y="192.58" width="596.5" height="10" fill="#c9c2be" opacity=".16"/>
<rect x="601.5" y="213.74" width="596.5" height="10" fill="#c9c2be" opacity=".16"/>
<rect x="601.5" y="234.9" width="596.5" height="10" fill="#c9c2be" opacity=".16"/>
<rect x="601.5" y="256.06" width="596.5" height="10" fill="#c9c2be" opacity=".16"/>
<rect x="601.5" y="277.22" width="596.5" height="10" fill="#c9c2be" opacity=".16"/>
<rect x="601.5" y="298.38" width="596.5" height="10" fill="#c9c2be" opacity=".16"/>
<rect x="601.5" y="319.54" width="596.5" height="10" fill="#c9c2be" opacity=".16"/>
<rect x="601.5" y="340.7" width="596.5" height="10" fill="#c9c2be" opacity=".16"/>
<rect x="601.5" y="361.86" width="596.5" height="10" fill="#c9c2be" opacity=".16"/>
<rect x="601.5" y="383.02" width="596.5" height="10" fill="#c9c2be" opacity=".16"/>
<rect x="601.5" y="404.18" width="596.5" height="10" fill="#c9c2be" opacity=".16"/>
<rect x="601.5" y="425.34" width="596.5" height="10" fill="#c9c2be" opacity=".16"/>
<rect x="601.5" y="446.5" width="596.5" height="10" fill="#c9c2be" opacity=".16"/>
<rect x="601.5" y="467.66" width="596.5" height="10" fill="#c9c2be" opacity=".16"/>
<rect x="601.5" y="488.82" width="596.5" height="10" fill="#c9c2be" opacity=".16"/>
<rect x="601.5" y="509.98" width="596.5" height="10" fill="#c9c2be" opacity=".16"/>
<rect x="601.5" y="531.14" width="596.5" height="10" fill="#c9c2be" opacity=".16"/>
<rect x="601.5" y="552.3" width="596.5" height="10" fill="#c9c2be" opacity=".16"/>
<rect x="601.5" y="573.46" width="596.5" height="10" fill="#c9c2be" opacity=".16"/>
<rect x="601.5" y="594.62" width="596.5" height="10" fill="#c9c2be" opacity=".16"/>
<rect x="601.5" y="615.78" width="596.5" height="10" fill="#c9c2be" opacity=".16"/>
<rect x="601.5" y="636.94" width="596.5" height="10" fill="#c9c2be" opacity=".16"/>
<rect x="601.5" y="658.1" width="596.5" height="10" fill="#c9c2be" opacity=".16"/>
<rect x="602.6" y="124.5" width=".9" height="535.5" fill="#cac3bf"/>
<rect x="666.08" y="124.5" width=".9" height="535.5" fill="#cac3bf"/>
<rect x="729.56" y="124.5" width=".9" height="535.5" fill="#cac3bf"/>
<rect x="793.04" y="124.5" width=".9" height="535.5" fill="#cac3bf"/>
<rect x="856.52" y="124.5" width=".9" height="535.5" fill="#cac3bf"/>
<rect x="920" y="124.5" width=".9" height="535.5" fill="#cac3bf"/>
<rect x="983.48" y="124.5" width=".9" height="535.5" fill="#cac3bf"/>
<rect x="1046.96" y="124.5" width=".9" height="535.5" fill="#cac3bf"/>
<rect x="1110.44" y="124.5" width=".9" height="535.5" fill="#cac3bf"/>
<rect x="1173.92" y="124.5" width=".9" height="535.5" fill="#cac3bf"/>
<rect x="601.5" y="128.7" width="596.5" height=".9" fill="#cac3bf"/>
<rect x="601.5" y="149.86" width="596.5" height=".9" fill="#cac3bf"/>
<rect x="601.5" y="171.02" width="596.5" height=".9" fill="#cac3bf"/>
<rect x="601.5" y="192.18" width="596.5" height=".9" fill="#cac3bf"/>
<rect x="601.5" y="213.34" width="596.5" height=".9" fill="#cac3bf"/>
<rect x="601.5" y="234.5" width="596.5" height=".9" fill="#cac3bf"/>
<rect x="601.5" y="255.66" width="596.5" height=".9" fill="#cac3bf"/>
<rect x="601.5" y="276.82" width="596.5" height=".9" fill="#cac3bf"/>
<rect x="601.5" y="297.98" width="596.5" height=".9" fill="#cac3bf"/>
<rect x="601.5" y="319.14" width="596.5" height=".9" fill="#cac3bf"/>
<rect x="601.5" y="340.3" width="596.5" height=".9" fill="#cac3bf"/>
<rect x="601.5" y="361.46" width="596.5" height=".9" fill="#cac3bf"/>
<rect x="601.5" y="382.62" width="596.5" height=".9" fill="#cac3bf"/>
<rect x="601.5" y="403.78" width="596.5" height=".9" fill="#cac3bf"/>
<rect x="601.5" y="424.94" width="596.5" height=".9" fill="#cac3bf"/>
<rect x="601.5" y="446.1" width="596.5" height=".9" fill="#cac3bf"/>
<rect x="601.5" y="467.26" width="596.5" height=".9" fill="#cac3bf"/>
<rect x="601.5" y="488.42" width="596.5" height=".9" fill="#cac3bf"/>
<rect x="601.5" y="509.58" width="596.5" height=".9" fill="#cac3bf"/>
<rect x="601.5" y="530.74" width="596.5" height=".9" fill="#cac3bf"/>
<rect x="601.5" y="551.9" width="596.5" height=".9" fill="#cac3bf"/>
<rect x="601.5" y="573.06" width="596.5" height=".9" fill="#cac3bf"/>
<rect x="601.5" y="594.22" width="596.5" height=".9" fill="#cac3bf"/>
<rect x="601.5" y="615.38" width="596.5" height=".9" fill="#cac3bf"/>
<rect x="601.5" y="636.54" width="596.5" height=".9" fill="#cac3bf"/>
<rect x="601.5" y="657.7" width="596.5" height=".9" fill="#cac3bf"/>
</g>
<path d="M601.5 419.61 C607.49 421.24 625.47 426.04 637.46 429.4 C649.45 432.76 661.44 436.2 673.42 439.77 C685.41 443.35 697.4 447.01 709.38 450.87 C721.37 454.73 733.36 458.7 745.35 462.95 C757.33 467.2 769.32 471.6 781.31 476.35 C793.29 481.1 805.28 486.07 817.27 491.43 C829.26 496.8 841.24 502.46 853.23 508.55 C865.22 514.64 877.21 521.09 889.19 527.98 C901.18 534.87 913.17 542.17 925.15 549.9 C937.14 557.62 949.13 565.79 961.12 574.32 C973.1 582.84 985.09 591.83 997.08 601.06 C1009.06 610.28 1021.05 619.94 1033.04 629.67 C1045.03 639.4 1063.01 654.48 1069 659.44" fill="none" stroke="#383634" stroke-width=".95"/>
<path d="M601.5 436.55 C606.6 438.08 621.89 442.5 632.09 445.75 C642.29 448.99 652.49 452.49 662.68 456.02 C672.88 459.54 683.08 463.17 693.28 466.89 C703.47 470.61 713.67 474.37 723.87 478.32 C734.07 482.26 744.26 486.27 754.46 490.57 C764.66 494.86 774.86 499.29 785.05 504.1 C795.25 508.92 805.45 513.96 815.65 519.46 C825.84 524.97 836.04 530.81 846.24 537.14 C856.44 543.47 866.63 550.24 876.83 557.46 C887.03 564.68 897.23 572.41 907.42 580.47 C917.62 588.52 927.82 597.11 938.02 605.8 C948.21 614.48 958.41 623.66 968.61 632.57 C978.81 641.48 994.1 654.8 999.2 659.25" fill="none" stroke="#383634" stroke-width=".95"/>
<path d="M601.5 459.74 C605.75 460.71 618.52 463.27 627.02 465.56 C635.53 467.85 644.04 470.65 652.55 473.48 C661.05 476.31 669.56 479.41 678.07 482.55 C686.58 485.7 695.08 488.97 703.59 492.35 C712.1 495.73 720.61 499.18 729.12 502.84 C737.62 506.5 746.13 510.24 754.64 514.29 C763.15 518.35 771.65 522.55 780.16 527.18 C788.67 531.8 797.18 536.67 805.68 542.05 C814.19 547.43 822.7 553.16 831.21 559.47 C839.72 565.77 848.22 572.54 856.73 579.88 C865.24 587.22 873.75 595.11 882.25 603.51 C890.76 611.91 899.27 620.91 907.78 630.27 C916.28 639.64 929.05 654.78 933.3 659.68" fill="none" stroke="#383634" stroke-width=".95"/>
<path d="M601.5 473.62 C605.79 474.4 618.67 476.16 627.25 478.26 C635.84 480.36 644.42 483.35 653.01 486.22 C661.59 489.09 670.18 492.34 678.76 495.46 C687.35 498.59 695.93 501.8 704.52 504.98 C713.1 508.17 721.68 511.3 730.27 514.56 C738.85 517.83 747.44 521.04 756.02 524.58 C764.61 528.11 773.19 531.69 781.78 535.75 C790.36 539.82 798.95 544.1 807.53 548.99 C816.12 553.87 824.7 559.15 833.28 565.09 C841.87 571.02 850.45 577.52 859.04 584.59 C867.62 591.67 876.21 599.43 884.79 607.54 C893.38 615.64 901.96 624.48 910.55 633.24 C919.13 642 932.01 655.61 936.3 660.08" fill="none" stroke="#383634" stroke-width=".95"/>
<path d="M601.5 493.27 C606.33 494.17 620.82 496.71 630.48 498.65 C640.15 500.6 649.81 502.74 659.47 504.95 C669.13 507.16 678.79 509.49 688.45 511.9 C698.12 514.31 707.78 516.8 717.44 519.41 C727.1 522.03 736.76 524.71 746.42 527.58 C756.08 530.45 765.75 533.41 775.41 536.63 C785.07 539.84 794.73 543.19 804.39 546.87 C814.05 550.56 823.72 554.43 833.38 558.73 C843.04 563.04 852.7 567.6 862.36 572.69 C872.02 577.77 881.68 583.2 891.35 589.24 C901.01 595.28 910.67 601.75 920.33 608.91 C929.99 616.07 939.65 623.76 949.32 632.2 C958.98 640.65 973.47 655.02 978.3 659.58" fill="none" stroke="#383634" stroke-width=".95"/>
<path d="M601.5 505.85 C606.41 506.6 621.15 508.51 630.98 510.34 C640.8 512.17 650.63 514.53 660.45 516.83 C670.28 519.12 680.11 521.65 689.93 524.12 C699.76 526.58 709.58 529.1 719.41 531.61 C729.23 534.12 739.06 536.6 748.88 539.18 C758.71 541.76 768.54 544.31 778.36 547.09 C788.19 549.86 798.01 552.66 807.84 555.83 C817.66 558.99 827.49 562.29 837.32 566.06 C847.14 569.84 856.97 573.88 866.79 578.5 C876.62 583.11 886.44 588.13 896.27 593.76 C906.09 599.39 915.92 605.55 925.75 612.3 C935.57 619.05 945.4 626.42 955.22 634.28 C965.05 642.14 979.79 655.27 984.7 659.46" fill="none" stroke="#383634" stroke-width=".95"/>
<path d="M601.5 531.3 C606.78 531.89 622.62 533.41 633.18 534.81 C643.74 536.21 654.29 537.94 664.85 539.69 C675.41 541.44 685.97 543.36 696.53 545.3 C707.09 547.24 717.65 549.25 728.21 551.32 C738.77 553.4 749.33 555.51 759.88 557.75 C770.44 559.99 781 562.26 791.56 564.75 C802.12 567.24 812.68 569.81 823.24 572.67 C833.8 575.52 844.36 578.53 854.92 581.9 C865.47 585.27 876.03 588.87 886.59 592.89 C897.15 596.9 907.71 601.23 918.27 605.99 C928.83 610.75 939.39 615.9 949.95 621.47 C960.51 627.03 971.06 633.04 981.62 639.39 C992.18 645.74 1008.02 656.21 1013.3 659.57" fill="none" stroke="#383634" stroke-width=".95"/>
<path d="M601.5 541.66 C606.77 542.27 622.58 543.78 633.12 545.29 C643.65 546.79 654.19 548.79 664.73 550.68 C675.27 552.56 685.81 554.64 696.35 556.6 C706.88 558.56 717.42 560.53 727.96 562.45 C738.5 564.37 749.04 566.21 759.58 568.12 C770.12 570.03 780.65 571.87 791.19 573.89 C801.73 575.92 812.27 577.94 822.81 580.28 C833.35 582.62 843.88 585.06 854.42 587.93 C864.96 590.79 875.5 593.88 886.04 597.45 C896.58 601.03 907.12 604.96 917.65 609.36 C928.19 613.76 938.73 618.62 949.27 623.86 C959.81 629.09 970.35 634.85 980.88 640.78 C991.42 646.72 1007.23 656.34 1012.5 659.45" fill="none" stroke="#383634" stroke-width=".95"/>
<path d="M632 260 C694 260 611.5 175 673.5 175" fill="none" stroke="#56514d" stroke-width="2.3" stroke-dasharray="2.7 3.5" stroke-linecap="round"/>
<path d="M632 260 C694 260 611.5 175 673.5 175" fill="none" stroke="#bdb6b1" stroke-width=".8" stroke-dasharray="2.7 3.5"/>
<path d="M632 260 C652 260 666.3 260 686.3 260" fill="none" stroke="#56514d" stroke-width="2.3" stroke-dasharray="2.7 3.5" stroke-linecap="round"/>
<path d="M632 260 C652 260 666.3 260 686.3 260" fill="none" stroke="#bdb6b1" stroke-width=".8" stroke-dasharray="2.7 3.5"/>
<path d="M632 260 C702 260 703.5 238 773.5 238" fill="none" stroke="#56514d" stroke-width="2.3" stroke-dasharray="2.7 3.5" stroke-linecap="round"/>
<path d="M632 260 C702 260 703.5 238 773.5 238" fill="none" stroke="#bdb6b1" stroke-width=".8" stroke-dasharray="2.7 3.5"/>
<path d="M730.5 251.6 C752.5 251.6 751.5 246.3 773.5 246.3" fill="none" stroke="#55504c" stroke-width="2.2"/>
<path d="M730.5 251.6 C752.5 251.6 751.5 246.3 773.5 246.3" fill="none" stroke="#a59e99" stroke-width=".6"/>
<path d="M760.5 312.3 C800.5 312.3 733.5 254.6 773.5 254.6" fill="none" stroke="#55504c" stroke-width="2.2"/>
<path d="M760.5 312.3 C800.5 312.3 733.5 254.6 773.5 254.6" fill="none" stroke="#a59e99" stroke-width=".6"/>
<path d="M760.5 312.3 C768.5 312.3 772.3 312.3 780.3 312.3" fill="none" stroke="#55504c" stroke-width="2.2"/>
<path d="M760.5 312.3 C768.5 312.3 772.3 312.3 780.3 312.3" fill="none" stroke="#a59e99" stroke-width=".6"/>
<path d="M696 311 C704 311 706.7 310.8 714.7 310.8" fill="none" stroke="#55504c" stroke-width="2.2"/>
<path d="M696 311 C704 311 706.7 310.8 714.7 310.8" fill="none" stroke="#a59e99" stroke-width=".6"/>
<path d="M821 246.3 C833 246.3 840.5 245.3 852.5 245.3" fill="none" stroke="#56514d" stroke-width="2.3" stroke-dasharray="2.7 3.5" stroke-linecap="round"/>
<path d="M821 246.3 C833 246.3 840.5 245.3 852.5 245.3" fill="none" stroke="#bdb6b1" stroke-width=".8" stroke-dasharray="2.7 3.5"/>
<path d="M889.8 258 C955.8 258 855.7 163.5 921.7 163.5" fill="none" stroke="#55504c" stroke-width="1.5"/>
<defs><linearGradient id="cg" x1="0" y1="0" x2="0" y2="1"><stop offset="0" stop-color="#ebebeb"/><stop offset=".5" stop-color="#dcdcdc"/><stop offset="1" stop-color="#c6c6c6"/></linearGradient><linearGradient id="pg" x1="0" y1="0" x2="0" y2="1"><stop offset="0" stop-color="#a3a3b8"/><stop offset="1" stop-color="#8a8aa0"/></linearGradient></defs>
<rect x="597.6" y="251.7" width="34.5" height="18.4" rx="1.6" fill="#8a8480" opacity=".45"/>
<rect x="597" y="250.9" width="34.5" height="18.4" rx="1.6" fill="url(#pg)" stroke="#4c4c4c" stroke-width=".8"/>
<path d="M631.7 258.5a1.5 1.5 0 0 1 0 3z" fill="#6a6a6a" stroke="#3c3c3c" stroke-width=".6"/>
<rect x="624.5" y="257.4" width="5.2" height="5" fill="#e9e9f0" stroke="#77778c" stroke-width=".4"/><path d="M626 258.5h2.2M626 259.9h2.2M626 261.3h2.2" stroke="#8a8aa0" stroke-width=".4"/>
<path d="M598.2 237.2H630.1Q631.3 237.2 631.3 238.4V243Q631.3 244.2 630.1 244.2H607.5L605.8 246.5L604.1 244.2H598.2Q597 244.2 597 243V238.4Q597 237.2 598.2 237.2Z" fill="#fbfbfb" stroke="#303030" stroke-width="1.15"/>
<rect x="686.9" y="247" width="43.8" height="27.2" rx="1.6" fill="#8a8480" opacity=".45"/>
<rect x="686.3" y="246.2" width="43.8" height="27.2" rx="1.6" fill="url(#cg)" stroke="#4c4c4c" stroke-width=".8"/>
<path d="M686.1 258.5a1.5 1.5 0 0 0 0 3z" fill="#6a6a6a" stroke="#3c3c3c" stroke-width=".6"/>
<path d="M730.3 250.1a1.5 1.5 0 0 1 0 3z" fill="#6a6a6a" stroke="#3c3c3c" stroke-width=".6"/>
<path d="M730.3 258.5a1.5 1.5 0 0 1 0 3z" fill="#6a6a6a" stroke="#3c3c3c" stroke-width=".6"/>
<path d="M730.3 267.2a1.5 1.5 0 0 1 0 3z" fill="#6a6a6a" stroke="#3c3c3c" stroke-width=".6"/>
<g><rect x="699.8" y="255.1" width="9.9" height="9.8" fill="#f6b23a"/><path d="M699.8 255.1h9.900v9.800z" fill="#bdbdbd"/><path d="M699.8 264.9h9.900c-2-5-5-8-9.900-9z" fill="#ffd35a" opacity=".9"/><path d="M700.5 256c4 1 7 4 8.600 8.500" stroke="#d8462a" stroke-width=".9" fill="none"/></g>
<path d="M693.7 232.9H723.1Q724.3 232.9 724.3 234.1V239Q724.3 240.2 723.1 240.2H710.2L708.5 242.5L706.8 240.2H693.7Q692.5 240.2 692.5 239V234.1Q692.5 232.9 693.7 232.9Z" fill="#fbfbfb" stroke="#303030" stroke-width="1.15"/>
<rect x="774.1" y="233.3" width="46.9" height="26.8" rx="1.6" fill="#8a8480" opacity=".45"/>
<rect x="773.5" y="232.5" width="46.9" height="26.8" rx="1.6" fill="url(#cg)" stroke="#4c4c4c" stroke-width=".8"/>
<path d="M773.3 236.6a1.5 1.5 0 0 0 0 3z" fill="#6a6a6a" stroke="#3c3c3c" stroke-width=".6"/>
<path d="M773.3 244.8a1.5 1.5 0 0 0 0 3z" fill="#6a6a6a" stroke="#3c3c3c" stroke-width=".6"/>
<path d="M773.3 253.2a1.5 1.5 0 0 0 0 3z" fill="#6a6a6a" stroke="#3c3c3c" stroke-width=".6"/>
<path d="M820.6 244.8a1.5 1.5 0 0 1 0 3z" fill="#6a6a6a" stroke="#3c3c3c" stroke-width=".6"/>
<g><rect x="795" y="241.2" width="8" height="3.400" fill="#4a4a4a"/><path d="M796 242.900h6" stroke="#e8e8e8" stroke-width=".9" stroke-dasharray="1.400 .700"/><path d="M799 244.600v2.400" stroke="#4a4a4a" stroke-width=".7"/><rect x="797.600" y="247" width="2.800" height="2.800" fill="#d8d8d8" stroke="#4a4a4a" stroke-width=".5"/></g>
<path d="M781.9 219.1H811.6Q812.8 219.1 812.8 220.3V225.2Q812.8 226.4 811.6 226.4H798.7L797 228.7L795.3 226.4H781.9Q780.7 226.4 780.7 225.2V220.3Q780.7 219.1 781.9 219.1Z" fill="#fbfbfb" stroke="#303030" stroke-width="1.15"/>
<rect x="853.1" y="228" width="37.1" height="35.4" rx="1.6" fill="#8a8480" opacity=".45"/>
<rect x="852.5" y="227.2" width="37.1" height="35.4" rx="1.6" fill="url(#cg)" stroke="#4c4c4c" stroke-width=".8"/>
<path d="M852.3 243.8a1.5 1.5 0 0 0 0 3z" fill="#6a6a6a" stroke="#3c3c3c" stroke-width=".6"/>
<path d="M889.8 231a1.5 1.5 0 0 1 0 3z" fill="#6a6a6a" stroke="#3c3c3c" stroke-width=".6"/>
<path d="M889.8 239.7a1.5 1.5 0 0 1 0 3z" fill="#6a6a6a" stroke="#3c3c3c" stroke-width=".6"/>
<path d="M889.8 247.9a1.5 1.5 0 0 1 0 3z" fill="#6a6a6a" stroke="#3c3c3c" stroke-width=".6"/>
<path d="M889.8 256.5a1.5 1.5 0 0 1 0 3z" fill="#6a6a6a" stroke="#3c3c3c" stroke-width=".6"/>
<g><path d="M872.300 246v3.400M870.300 249.600h4" stroke="#8a5a2a" stroke-width=".8"/><circle cx="872.300" cy="243.400" r="3.300" fill="#f29a3a"/><circle cx="869.800" cy="244.600" r="1.700" fill="#f6b45a"/><circle cx="874.800" cy="244.600" r="1.700" fill="#f6b45a"/><circle cx="872.300" cy="241" r="1.600" fill="#f6b45a"/></g>
<path d="M857.2 213.2H884.6Q885.8 213.2 885.8 214.4V219.4Q885.8 220.6 884.6 220.6H872.3L870.6 222.9L868.9 220.6H857.2Q856 220.6 856 219.4V214.4Q856 213.2 857.2 213.2Z" fill="#fbfbfb" stroke="#303030" stroke-width="1.15"/>
<rect x="715.3" y="306.1" width="45.6" height="27.4" rx="1.6" fill="#8a8480" opacity=".45"/>
<rect x="714.7" y="305.3" width="45.6" height="27.4" rx="1.6" fill="url(#cg)" stroke="#4c4c4c" stroke-width=".8"/>
<path d="M714.5 309.2a1.5 1.5 0 0 0 0 3z" fill="#6a6a6a" stroke="#3c3c3c" stroke-width=".6"/>
<path d="M714.5 317.4a1.5 1.5 0 0 0 0 3z" fill="#6a6a6a" stroke="#3c3c3c" stroke-width=".6"/>
<path d="M714.5 325.4a1.5 1.5 0 0 0 0 3z" fill="#6a6a6a" stroke="#3c3c3c" stroke-width=".6"/>
<path d="M760.5 310.9a1.5 1.5 0 0 1 0 3z" fill="#6a6a6a" stroke="#3c3c3c" stroke-width=".6"/>
<path d="M760.5 323.8a1.5 1.5 0 0 1 0 3z" fill="#6a6a6a" stroke="#3c3c3c" stroke-width=".6"/>
<path d="M730.200 321.200C732.400 321.200 732.700 315.500 734.300 315.500C735.900 315.500 736.200 321.200 738.400 321.200" fill="none" stroke="#d84a5a" stroke-width=".9"/><path d="M730 321.500h8.600" stroke="#7a7a7a" stroke-width=".4"/>
<path d="M731.5 291.7H743.4Q744.6 291.7 744.6 292.9V297.5Q744.6 298.7 743.4 298.7H739.1L737.4 301L735.7 298.7H731.5Q730.3 298.7 730.3 297.5V292.9Q730.3 291.7 731.5 291.7Z" fill="#fbfbfb" stroke="#303030" stroke-width="1.15"/>
<rect x="674.1" y="126.3" width="67.8" height="98.6" rx="1.800" fill="#7a746c" opacity=".5"/>
<rect x="673.6" y="125.4" width="67.8" height="98.6" rx="1.800" fill="#fff95e"/>
<rect x="674.1" y="125.6" width="66.8" height="8" fill="#e7df52"/>
<rect x="674.1" y="140.3" width="66.8" height="6.7" fill="#f4ed58"/>
<rect x="674.1" y="147" width="66.8" height="8" fill="#e7df52"/>
<rect x="674.1" y="161.7" width="66.8" height="6.7" fill="#f4ed58"/>
<rect x="674.1" y="146.7" width="66.8" height="0.6" fill="#bdb545"/>
<rect x="674.1" y="168.4" width="66.8" height="8" fill="#e7df52"/>
<rect x="674.1" y="183.1" width="66.8" height="6.7" fill="#f4ed58"/>
<rect x="674.1" y="168.1" width="66.8" height="0.6" fill="#bdb545"/>
<rect x="674.1" y="189.8" width="66.8" height="8" fill="#e7df52"/>
<rect x="674.1" y="204.5" width="66.8" height="6.7" fill="#f4ed58"/>
<rect x="674.1" y="189.5" width="66.8" height="0.6" fill="#bdb545"/>
<path d="M679.2 126.4V223" stroke="#d8d04a" stroke-width=".5"/>
<rect x="673.6" y="125.4" width="67.8" height="98.6" rx="1.800" fill="none" stroke="#5a5636" stroke-width=".8"/>
<path d="M673.4 173.5a1.5 1.5 0 0 0 0 3z" fill="#6a6a6a" stroke="#3c3c3c" stroke-width=".6"/>
<path d="M741.6 173.5a1.5 1.5 0 0 1 0 3z" fill="#6a6a6a" stroke="#3c3c3c" stroke-width=".6"/>
<rect x="922.2" y="125.9" width="67.6" height="89.3" rx="1.800" fill="#7a746c" opacity=".5"/>
<rect x="921.7" y="125" width="67.6" height="89.3" rx="1.800" fill="#fff95e"/>
<rect x="922.2" y="125.5" width="66.6" height="8.5" fill="#f6ef5a"/>
<path d="M927.8 126V213.3" stroke="#d8d04a" stroke-width=".5"/>
<rect x="921.7" y="125" width="67.6" height="89.3" rx="1.800" fill="none" stroke="#5a5636" stroke-width=".8"/>
<path d="M921.5 162a1.5 1.5 0 0 0 0 3z" fill="#6a6a6a" stroke="#3c3c3c" stroke-width=".6"/>
<path d="M989.5 162a1.5 1.5 0 0 1 0 3z" fill="#6a6a6a" stroke="#3c3c3c" stroke-width=".6"/>
<rect x="624.6" y="290.2" width="71.6" height="42.4" rx="1.800" fill="#7a746c" opacity=".5"/>
<rect x="624.1" y="289.3" width="71.6" height="42.4" rx="1.800" fill="#fff95e"/>
<rect x="624.6" y="289.8" width="70.6" height="7.5" fill="#e7df52"/>
<rect x="624.6" y="303.74" width="70.6" height="6.44" fill="#f4ed58"/>
<rect x="624.6" y="316.62" width="70.6" height="6.44" fill="#f4ed58"/>
<path d="M629.2 290.3V330.7" stroke="#d8d04a" stroke-width=".5"/>
<rect x="624.1" y="289.3" width="71.6" height="42.4" rx="1.800" fill="none" stroke="#5a5636" stroke-width=".8"/>
<path d="M623.9 309.5a1.5 1.5 0 0 0 0 3z" fill="#6a6a6a" stroke="#3c3c3c" stroke-width=".6"/>
<path d="M695.9 309.5a1.5 1.5 0 0 1 0 3z" fill="#6a6a6a" stroke="#3c3c3c" stroke-width=".6"/>
<rect x="781.1" y="292.6" width="66.8" height="42.1" rx="1.800" fill="#7a746c" opacity=".5"/>
<rect x="780.6" y="291.7" width="66.8" height="42.1" rx="1.800" fill="#fff95e"/>
<rect x="781.1" y="292.2" width="65.8" height="7.3" fill="#e7df52"/>
<rect x="781.1" y="305.94" width="65.8" height="6.44" fill="#f4ed58"/>
<rect x="781.1" y="318.82" width="65.8" height="6.44" fill="#f4ed58"/>
<path d="M785.7 292.7V332.8" stroke="#d8d04a" stroke-width=".5"/>
<rect x="780.6" y="291.7" width="66.8" height="42.1" rx="1.800" fill="none" stroke="#5a5636" stroke-width=".8"/>
<path d="M780.4 310.8a1.5 1.5 0 0 0 0 3z" fill="#6a6a6a" stroke="#3c3c3c" stroke-width=".6"/>
<path d="M847.6 310.8a1.5 1.5 0 0 1 0 3z" fill="#6a6a6a" stroke="#3c3c3c" stroke-width=".6"/>
<defs><linearGradient id="wg" x1="0" y1="0" x2="1" y2="1"><stop offset="0" stop-color="#b4b4b4"/><stop offset="1" stop-color="#7c7c7c"/></linearGradient></defs><rect x="601.5" y="642" width="57.3" height="17" fill="url(#wg)" stroke="#5a5a5a" stroke-width=".6"/>
<g><path d="M607.500 643.600h4.600c1.400 0 2.200.8 2.200 2.200v3h-5.400c-1.200 0-2 .8-2 2v2.400h-2c-1.400 0-2.200-1-2.200-2.400v-2.200c0-1.400.8-2.400 2.200-2.400h3.600v-.8h-3.200v-1c0-.6.600-.8 2.200-.8z" fill="#3a72b0"/><path d="M611.500 658.400h-4.400c-1.400 0-2.200-.8-2.200-2.200v-3h5.400c1.200 0 2-.8 2-2v-2.400h2c1.400 0 2.200 1 2.200 2.400v2.200c0 1.400-.8 2.400-2.200 2.400h-3.600v.8h3.200v1c0 .6-.600.8-2.400.8z" fill="#f2b830"/></g>
<g stroke="#111" stroke-width=".7" fill="none"><path d="M623 655.600h6.600"/><circle cx="623.400" cy="655.600" r="1" fill="#fff"/><path d="M628 654.200l1.800 1.400-1.800 1.400z" fill="#111"/><path d="M624.200 649.400l1.800 3M628.800 649.400l-1.800 3M626.500 649.400v3.400" stroke-width=".4" stroke-dasharray=".8 .5"/></g>
<path d="M638.800 650.700l3.500-6h7l3.500 6-3.500 6h-7z" fill="#0c0c0c"/><path d="M641.800 650.700l2-3.400h4l2 3.400-2 3.400h-4z" fill="#d8d8d8"/><ellipse cx="646.800" cy="649.700" rx="2.200" ry="1.700" fill="#f8f8f8"/>
<circle cx="607.600" cy="667.800" r="3.800" fill="#3a7ad8" stroke="#1a3a8a" stroke-width=".6"/><path d="M606.600 665.400c1.800 1 1.800 3.800 0 4.800M608.400 665.400c-1 1.400-1 3.400 0 4.800" stroke="#fff" stroke-width=".7" fill="none"/>
<g fill="#9a9a9a"><rect x="1195.400" y="671.400" width="1" height="1"/><rect x="1193.400" y="671.400" width="1" height="1"/><rect x="1191.400" y="671.400" width="1" height="1"/><rect x="1195.400" y="669.400" width="1" height="1"/><rect x="1193.400" y="669.400" width="1" height="1"/><rect x="1195.400" y="667.400" width="1" height="1"/></g>
<defs><radialGradient id="cw" cx=".5" cy=".45" r=".6"><stop offset="0" stop-color="#f2f2f2"/><stop offset=".7" stop-color="#d4d4d4"/><stop offset="1" stop-color="#c2c2c2"/></radialGradient></defs>
<path d="M1157.800 640.500a13.600 13.600 0 0 1 5-20.600" fill="none" stroke="#0c0c0c" stroke-width="1.800"/><path d="M1184 635a13.600 13.600 0 0 1 -22 8.800" fill="none" stroke="#0c0c0c" stroke-width="1.800"/><path d="M1155.400 645l4.400-4.800.8 3.800z" fill="#0c0c0c"/>
<circle cx="1170.600" cy="632.200" r="12.200" fill="url(#cw)" stroke="#fafafa" stroke-width="1.200"/>
<g stroke="#fff" stroke-width=".9"><path d="M1161.200 622.800l1.700 1.700M1180 622.800l-1.700 1.700M1161.200 641.600l1.700-1.700M1180 641.600l-1.700-1.700"/></g>
<defs><linearGradient id="rp" x1="0" y1="0" x2="0" y2="1"><stop offset="0" stop-color="#efefef"/><stop offset="1" stop-color="#e2e2e2"/></linearGradient></defs>
<rect x="602.7" y="52.4" width="85" height="44.3" rx="2.4" fill="url(#rp)" stroke="#6a6a6a" stroke-width=".7"/>
<path d="M603 89.500H687.4V94.400Q687.4 96.500 685.1 96.500H605.3Q603 96.500 603 94.400Z" fill="#1c1c1c"/>
<rect x="690.2" y="52.4" width="102.5" height="44.3" rx="2.4" fill="url(#rp)" stroke="#6a6a6a" stroke-width=".7"/>
<path d="M690.5 89.500H792.4V94.400Q792.4 96.500 790.1 96.500H692.8Q690.5 96.500 690.5 94.400Z" fill="#1c1c1c"/>
<rect x="795.2" y="52.4" width="96.3" height="44.3" rx="2.4" fill="url(#rp)" stroke="#6a6a6a" stroke-width=".7"/>
<path d="M795.5 89.500H891.2V94.400Q891.2 96.500 888.9 96.500H797.8Q795.5 96.500 795.5 94.400Z" fill="#1c1c1c"/>
<rect x="894.4" y="52.4" width="85" height="44.3" rx="2.4" fill="url(#rp)" stroke="#6a6a6a" stroke-width=".7"/>
<path d="M894.7 89.500H979.1V94.400Q979.1 96.500 976.8 96.500H897Q894.7 96.500 894.7 94.400Z" fill="#1c1c1c"/>
<rect x="981.9" y="52.4" width="84.3" height="44.3" rx="2.4" fill="url(#rp)" stroke="#6a6a6a" stroke-width=".7"/>
<path d="M982.2 89.500H1065.9V94.400Q1065.9 96.500 1063.6 96.500H984.5Q982.2 96.500 982.2 94.400Z" fill="#1c1c1c"/>
<rect x="1069" y="52.4" width="78.7" height="44.3" rx="2.4" fill="url(#rp)" stroke="#6a6a6a" stroke-width=".7"/>
<path d="M1069.3 89.500H1147.4V94.400Q1147.4 96.500 1145.1 96.500H1071.6Q1069.3 96.500 1069.3 94.400Z" fill="#1c1c1c"/>
<rect x="1150.6" y="52.4" width="19.6" height="44.3" rx="2.4" fill="url(#rp)" stroke="#6a6a6a" stroke-width=".7"/>
<path d="M1150.9 89.500H1169.9V94.400Q1169.9 96.500 1167.6 96.500H1153.2Q1150.9 96.500 1150.9 94.400Z" fill="#1c1c1c"/>
<rect x="1173.1" y="52.4" width="19.6" height="44.3" rx="2.4" fill="url(#rp)" stroke="#6a6a6a" stroke-width=".7"/>
<path d="M1173.4 89.500H1192.4V94.400Q1192.4 96.500 1190.1 96.500H1175.7Q1173.4 96.500 1173.4 94.400Z" fill="#1c1c1c"/>
<path d="M623.4 56.500V86" stroke="#c9c9c9" stroke-width=".7"/><path d="M624.1 56.500V86" stroke="#fafafa" stroke-width=".6"/>
<path d="M665.2 56.500V86" stroke="#c9c9c9" stroke-width=".7"/><path d="M665.9000000000001 56.500V86" stroke="#fafafa" stroke-width=".6"/>
<path d="M728.7 56.500V86" stroke="#c9c9c9" stroke-width=".7"/><path d="M729.4000000000001 56.500V86" stroke="#fafafa" stroke-width=".6"/>
<path d="M752.5 56.500V86" stroke="#c9c9c9" stroke-width=".7"/><path d="M753.2 56.500V86" stroke="#fafafa" stroke-width=".6"/>
<path d="M851.5 56.500V86" stroke="#c9c9c9" stroke-width=".7"/><path d="M852.2 56.500V86" stroke="#fafafa" stroke-width=".6"/>
<path d="M915.6 56.500V86" stroke="#c9c9c9" stroke-width=".7"/><path d="M916.3000000000001 56.500V86" stroke="#fafafa" stroke-width=".6"/>
<path d="M956.2 56.500V86" stroke="#c9c9c9" stroke-width=".7"/><path d="M956.9000000000001 56.500V86" stroke="#fafafa" stroke-width=".6"/>
<path d="M1003 56.500V86" stroke="#c9c9c9" stroke-width=".7"/><path d="M1003.7 56.500V86" stroke="#fafafa" stroke-width=".6"/>
<path d="M1046.5 56.500V86" stroke="#c9c9c9" stroke-width=".7"/><path d="M1047.2 56.500V86" stroke="#fafafa" stroke-width=".6"/>
<path d="M1107.5 56.500V86" stroke="#c9c9c9" stroke-width=".7"/><path d="M1108.2 56.500V86" stroke="#fafafa" stroke-width=".6"/>
<path d="M682.7 93h2.600M684 91.700v2.600" stroke="#8a8a8a" stroke-width=".7"/>
<path d="M787.7 93h2.600M789 91.700v2.600" stroke="#8a8a8a" stroke-width=".7"/>
<path d="M886.2 93h2.600M887.5 91.700v2.600" stroke="#8a8a8a" stroke-width=".7"/>
<path d="M1061.0 93h2.600M1062.3 91.700v2.600" stroke="#8a8a8a" stroke-width=".7"/>
<path d="M1142.5 93h2.600M1143.8 91.700v2.600" stroke="#8a8a8a" stroke-width=".7"/>
<g transform="translate(612.5 61.1)"><circle r="6" fill="#c9141a" stroke="#3a0a0a" stroke-width=".6"/><g fill="#1a0a0a"><circle cx="-2.4" cy="-2" r="1.300"/><circle cx="2" cy="-2.600" r="1.200"/><circle cx="0" cy=".6" r="1.300"/><circle cx="-3" cy="2.400" r="1.100"/><circle cx="3" cy="2" r="1.200"/><circle cx="0" cy="4" r="1"/></g></g>
<g transform="translate(612.5 78.9)"><circle r="5" fill="#e8161e" stroke="#5a0a0a" stroke-width=".8"/><g stroke="#5a0a0a" stroke-width="1"><path d="M0 -6.400v1.400M0 6.400v-1.400M-6.400 0h1.400M6.400 0h-1.400M-4.500 -4.500l1 1M4.500 -4.500l-1 1M-4.500 4.500l1-1M4.500 4.500l-1-1"/></g></g>
<g transform="translate(636 61.7)"><rect x="-7" y="-5.300" width="14" height="10.600" fill="#e8161e"/><rect x="-5.400" y="-3.600" width="5" height="1.600" fill="#5a0a0a"/><path d="M-4 -1v2.600h2M-1 .4l1.600 1.200-1.600 1.200z" fill="none" stroke="#2a0a0a" stroke-width=".9"/><rect x="0" y="1.800" width="5" height="1.200" fill="#8a1a1a"/></g>
<g transform="translate(654.1 61.7)"><rect x="-7" y="-5.300" width="14" height="10.600" fill="#e8161e"/><rect x="1.400" y="-4.300" width="5.600" height="9.600" fill="#7a7a7a"/><rect x="-5" y="-3.300" width="2" height="2" fill="#fff"/><rect x="-1.600" y="-3.300" width="2" height="2" fill="#fff"/><rect x="2.400" y="-3.300" width="3.400" height="2.200" fill="#e8e8e8"/><rect x="2.400" y="0" width="1.400" height="1.400" fill="#d8d8d8"/><rect x="4.600" y="0" width="1.400" height="1.400" fill="#d8d8d8"/><rect x="-4.600" y="1" width="4" height="2.400" fill="#8a1a1a"/></g>
<g transform="translate(636 79.2)"><rect x="-7" y="-5.300" width="14" height="10.600" fill="#e8161e"/><path d="M-5.600 -1.400h4v-2l3.600 3.400-3.600 3.400v-2h-4z" fill="#1a0a0a"/><circle cx="4" cy="0" r="1" fill="#2a0a0a"/><path d="M-4 3.600h8" stroke="#8a1a1a" stroke-width=".8"/></g>
<g transform="translate(654.1 79.2)"><rect x="-7" y="-5.300" width="14" height="10.600" fill="#e8161e"/><path d="M-7 -5.300h5l1.400 1.600h7.600v2h-14z" fill="#f4f4f4" opacity=".85"/><rect x="-4.600" y="1" width="6" height="1.400" fill="#5a0a0a"/><circle cx="-4.400" cy="1.700" r="1" fill="#1a0a0a"/></g>
<g style="font-family:&quot;Liberation Serif&quot;,serif" font-weight="bold" fill="#0a0a0a" font-size="8.600"><text x="670.400" y="61.400">I</text><text x="670" y="69.600" textLength="14.600" lengthAdjust="spacingAndGlyphs">NY</text><text x="670.400" y="78.300">I</text><text x="670" y="86.400" textLength="14.600" lengthAdjust="spacingAndGlyphs">NY</text></g>
<path d="M680.600 61.400c-3-2.200-4.600-3.800-4.600-5.400 0-2.600 3.600-2.800 4.600-.6 1-2.200 4.600-2 4.600.6 0 1.600-1.600 3.200-4.600 5.400z" fill="#e8161e"/>
<path d="M676.400 74h4.400v-2.200l4 3.400-4 3.400v-2.200h-4.400z" fill="#e8161e"/>
<g transform="translate(700 61.5)"><path d="M-6.400 -.4h12.400" stroke="#e8161e" stroke-width="2.600" stroke-dasharray="1.600 .900"/><path d="M-5.800 -.4h11" stroke="#2a0a0a" stroke-width=".8" stroke-dasharray="1 1.500"/><g stroke="#e8161e" stroke-width=".9" fill="none"><path d="M4.400 -6.400v4M2.400 -5.600l2 3 2-3M-4.400 6.400v-4M-6.400 5.600l2-3 2 3"/></g></g>
<g transform="translate(717.7 61.5)"><text x="-6.800" y="2.400" font-size="6.400" font-weight="bold" style="font-family:&quot;Liberation Serif&quot;,serif" fill="#1a1a1a" textLength="13.600" lengthAdjust="spacingAndGlyphs">DMH</text><path d="M-2.400 -6v12M2.600 -6v12" stroke="#5a5a5a" stroke-width=".5" stroke-dasharray="1.400 .800"/></g>
<g transform="translate(700 79.4)"><g font-size="7" font-weight="bold" style="font-family:&quot;Liberation Serif&quot;,serif" fill="#0a0a0a"><text x="-6.800" y="-.4" textLength="13.600" lengthAdjust="spacingAndGlyphs">010</text><text x="-6.800" y="6" textLength="13.600" lengthAdjust="spacingAndGlyphs">100</text></g><ellipse cx=".4" cy="2.400" rx="2.200" ry="7" fill="none" stroke="#e8161e" stroke-width=".5" stroke-dasharray="1 .700"/></g>
<g transform="translate(717.7 79.4)"><g font-size="6" font-weight="bold"  fill="#1a1a1a"><text x="-5.800" y="-.6">B</text><text x="1.800" y="-.6">8</text><text x="-5.800" y="5.600">A</text><text x="1.800" y="5.600">2</text></g><path d="M0 -6.400v13" stroke="#e8161e" stroke-width=".6" stroke-dasharray="1.200 .800"/></g>
<g transform="translate(741.2 61.5)"><rect x="-5.800" y="-5" width="11.600" height="11" fill="#f6f6f6" stroke="#bdbdbd" stroke-width=".5"/><path d="M-2.600 -6.400v7" stroke="#2a8ad8" stroke-width="1.300"/><circle cx="-2.600" cy="2.400" r="2.400" fill="#2a8ad8"/><path d="M2.600 -6.400v6" stroke="#e8161e" stroke-width="1.600"/><path d="M.4 0h4.400l-2.200 4.400z" fill="#e8161e"/></g>
<g transform="translate(741.2 79.4)"><path d="M-6.400 -.6h9" stroke="#1aa8e8" stroke-width="1.400"/><path d="M1 -3.400l3.600 2.800-3.600 2.800" fill="none" stroke="#1aa8e8" stroke-width="1.300"/><path d="M-6.400 6c6-.6 10.400-5 12.400-12" fill="none" stroke="#1a1a1a" stroke-width=".9"/><path d="M-6.400 6.400h12.800" stroke="#8a8a8a" stroke-width=".4"/></g>
<g transform="translate(765 61.5)"><rect x="-7" y="-6.800" width="14" height="13.600" fill="#d4d4d4" stroke="#3a3a3a" stroke-width=".9"/><path d="M-4.800 -5v8" stroke="#8a1a1a" stroke-width="1.400"/><circle cx="-4.800" cy="4" r="1.700" fill="#b81a1a"/><circle cx="-2.600" cy="-4.400" r="1.600" fill="#2a8ad8"/><circle cx="3" cy="-2.600" r="1.500" fill="#0a0a0a"/><path d="M3.400 -1.200c-2.400.6-3.400 2.400-3 4.200l1.400.2.200 3h1.400l.4-3 1.200 3h1.400l-1.200-4.400c.6-1.400.2-2.600-1.800-3z" fill="#0a0a0a"/></g>
<g transform="translate(782.5 61.5)"><rect x="-7" y="-6.800" width="14" height="13.600" fill="#d4d4d4" stroke="#3a3a3a" stroke-width=".9"/><path d="M-4.800 -5v8" stroke="#8a1a1a" stroke-width="1.400"/><circle cx="-4.800" cy="4" r="1.700" fill="#b81a1a"/><circle cx="-2.600" cy="-4.400" r="1.600" fill="#2a8ad8"/><circle cx="2" cy="-2.800" r="1.500" fill="#0a0a0a"/><path d="M1 -1.200v4h3.400v3.400h1.400v-4.800h-3.200v-2.600zM-.6 -.6v5h1.200v2h.8v-3.200h-1z" fill="#0a0a0a"/></g>
<g transform="translate(765 79.4)"><path d="M-4.800 -5v8" stroke="#8a1a1a" stroke-width="1.400"/><circle cx="-4.800" cy="4" r="1.700" fill="#b81a1a"/><circle cx="-2.600" cy="-4.400" r="1.600" fill="#2a8ad8"/><circle cx="2" cy="-4" r="1.500" fill="#0a0a0a"/><path d="M.8 -2.400h2.600l.6 4 1.600 4.600h-1.600l-1.600-3.800-1.600 3.800h-1.600l1.600-4.600z" fill="#0a0a0a"/><circle cx="5.600" cy="-5" r="1.200" fill="#ffd800" stroke="#8a6a00" stroke-width=".3"/></g>
<g transform="translate(782.5 79.4)"><circle cx="-2.600" cy="-3" r="2.800" fill="#ffd800" stroke="#c86a00" stroke-width=".8"/><path d="M3 -5.600c1.400 1.800 2 2.800 2 3.600a2 2 0 0 1-4 0c0-.8.600-1.800 2-3.600z" fill="#2a8ad8"/><path d="M-3 1l4 2.600-2 3.200-3.400-1.600z" fill="#e8161e"/><path d="M2 3.400l3.400 1-1.600 2.400z" fill="#2a5ad8"/></g>
<g transform="translate(805 61.5)"><path d="M-4.600 -1l4-4.400 5 2 .6 5-5 3.600z" fill="#c88a92" stroke="#6a4a52" stroke-width=".5"/><g stroke="#3a3a3a" stroke-width=".5"><path d="M-7 3.400l3-1.600M7 -4l-2.600 1M0 -7v2M6.600 3.400l-2-1M-5.800 -5l2 1.600"/></g></g>
<g transform="translate(822.7 61.5)"><path d="M-6 6c2.400-1 3.400-12 5.600-12S3.600 5 6 6z" fill="#8a5a8a"/><path d="M-3.600 6c1.400-1 2-7 3.400-7s2 6 3.400 7z" fill="#8ad8e8"/><path d="M-6 6c2.400-1 3.400-12 5.600-12S3.600 5 6 6" fill="none" stroke="#c81a3a" stroke-width=".9"/><path d="M-6.400 -6v12.400h13" fill="none" stroke="#1a1a1a" stroke-width=".6"/></g>
<g transform="translate(840 61.5)"><path d="M-6.400 6.400h12.800v-12.400c-3 0-3 8-12.800 10z" fill="#b8b8c4" stroke="#5a5a6a" stroke-width=".5"/><path d="M-4 6.400v-2.600M-1.600 6.400v-4M1 6.400v-6.400M3.600 6.400v-10" stroke="#5a5a6a" stroke-width=".5"/><path d="M1 -1l4 4.400" stroke="#c81a3a" stroke-width=".8"/><path d="M2 -3.400l3.600 3.400" stroke="#1a1a1a" stroke-width=".6"/></g>
<g transform="translate(805 79.4)"><rect x="-7" y="-6.400" width="14" height="13" fill="#e4e4e8" stroke="#3a3a3a" stroke-width=".9"/><path d="M-3.600 -6.400v13M0 -6.400v13M3.600 -6.400v13M-7 -2h14M-7 2.400h14" stroke="#8a8a92" stroke-width=".5"/><path d="M-6.400 3.400l12.800-5.600" stroke="#1a1a1a" stroke-width="2.400"/><path d="M-6.400 3.400l12.800-5.600" stroke="#f05a7a" stroke-width="1.200"/></g>
<g transform="translate(822.7 79.4)"><rect x="-5.800" y="-4.400" width="2.600" height="10.400" fill="#c83a4a"/><rect x="-2.600" y="-1" width="2.600" height="7" fill="#3a8ac8"/><rect x=".6" y="1" width="2.600" height="5" fill="#3a8ac8"/><rect x="3.200" y="-5.400" width="2.600" height="11.400" fill="#a88a92"/><path d="M-6.400 6.200h13" stroke="#3a3a3a" stroke-width=".5"/></g>
<defs><radialGradient id="sg1" cx=".5" cy=".6" r=".6"><stop offset="0" stop-color="#fff7c0"/><stop offset=".45" stop-color="#ffc428"/><stop offset="1" stop-color="#f0602a"/></radialGradient></defs>
<g transform="translate(864 61.5)"><circle r="6.800" fill="url(#sg1)" stroke="#e8582a" stroke-width=".6"/></g>
<g transform="translate(881.9 61.5)"><circle r="6.800" fill="#3a9ad8"/><circle cx=".8" cy="0" r="6" fill="#ffd028"/><circle cx="1.800" cy="0" r="5.400" fill="#f07a1a"/><path d="M4.600 -4l-5.600 5.600M-1.400 -1.800v3.800h3.800" fill="none" stroke="#fff" stroke-width="1.500"/></g>
<g transform="translate(864 79.4)"><circle cx="-1.400" cy="0" r="5.800" fill="#e8e000" stroke="#5a5a00" stroke-width=".6"/><circle cx="1" cy=".4" r="5.600" fill="#fff200" stroke="#5a5a00" stroke-width=".6"/><path d="M3 4l1.200 1.200 1.600-.4-.4 1.600 1.200 1.200-1.800.2-.8 1.600-.8-1.600-1.800-.2 1.300-1.200z" fill="#1a1a1a"/></g>
<g transform="translate(881.9 79.4)"><path d="M-6.400 1l2-1.600 7.400 5.600-2 1.600z" fill="#e8e000" stroke="#5a5a00" stroke-width=".5"/><path d="M-1 1.400l4-5" stroke="#1a1a1a" stroke-width=".7"/><circle cx="2" cy="-2.400" r="1" fill="#1a1a1a"/><circle cx="4.400" cy="-5" r="1.800" fill="#fff200" stroke="#8a8a00" stroke-width=".4"/><path d="M4.400 -8v1M7.400 -5h-1M6.600 -7.200l-.7.700M2.200 -7.200l.7.700" stroke="#5a5a00" stroke-width=".4"/></g>
<g transform="translate(903.1 61.5)"><g stroke="#1a1a1a" stroke-width=".9"><path d="M4.8 0L6.8 0"/><path d="M4.16 2.4L5.89 3.4"/><path d="M2.4 4.16L3.4 5.89"/><path d="M0 4.8L0 6.8"/><path d="M-2.4 4.16L-3.4 5.89"/><path d="M-4.16 2.4L-5.89 3.4"/><path d="M-4.8 0L-6.8 0"/><path d="M-4.16 -2.4L-5.89 -3.4"/><path d="M-2.4 -4.16L-3.4 -5.89"/><path d="M-0 -4.8L-0 -6.8"/><path d="M2.4 -4.16L3.4 -5.89"/><path d="M4.16 -2.4L5.89 -3.4"/></g><circle r="3.8" fill="#f8a83a"/></g>
<g transform="translate(903.1 79.4)"><g stroke="#1a1a1a" stroke-width=".9"><path d="M4.8 0L6.8 0"/><path d="M4.16 2.4L5.89 3.4"/><path d="M2.4 4.16L3.4 5.89"/><path d="M0 4.8L0 6.8"/><path d="M-2.4 4.16L-3.4 5.89"/><path d="M-4.16 2.4L-5.89 3.4"/><path d="M-4.8 0L-6.8 0"/><path d="M-4.16 -2.4L-5.89 -3.4"/><path d="M-2.4 -4.16L-3.4 -5.89"/><path d="M-0 -4.8L-0 -6.8"/><path d="M2.4 -4.16L3.4 -5.89"/><path d="M4.16 -2.4L5.89 -3.4"/></g><circle r="3.8" fill="#fff200"/><path d="M0 -3.400v3.600h3.400" fill="none" stroke="#1a1a1a" stroke-width="1"/></g>
<g transform="translate(927.1 61.5)"><path d="M-5.400 3.400l5-2 4 1.400-5 2.400z" fill="#0a0a0a"/><path d="M-1.400 -3l3-1.600 3 1v5l-3 1.800-3-1.200z" fill="#f4f4f4" stroke="#1a1a1a" stroke-width=".6"/><path d="M-1.400 -3l3 1.200 3-1.800M1.600 -1.800v5" fill="none" stroke="#1a1a1a" stroke-width=".5"/><circle cx="5" cy="-5.600" r="1.900" fill="#e8f05a"/></g>
<g transform="translate(944.7 61.5)"><g stroke="#5a5a5a" stroke-width=".5"><path d="M0 -7v14M-7 0h14M-5 -5l10 10M5 -5l-10 10M-6.400 -2.600l12.800 5.200M6.400 -2.600l-12.800 5.200M-2.600 -6.400l5.200 12.800M2.600 -6.400l-5.200 12.800"/></g><circle r="3.600" fill="#e8e000"/><circle r="2.400" fill="#2ab8a8"/><circle r="1.100" fill="#1a5ad8"/></g>
<g transform="translate(927.1 79.4)"><path d="M-7 0c3-5.400 11-5.400 14 0-3 5.400-11 5.400-14 0z" fill="#e8161e"/><circle r="3" fill="#2a9ae8"/><circle r="1.300" fill="#0a0a0a"/></g>
<g transform="translate(944.7 79.4)"><g stroke="#1a1a1a" stroke-width=".5"><path d="M0 -7v14M-7 0h14M-5 -5l10 10M5 -5l-10 10"/></g><path d="M0 0l-5.400-3.600 3.400-2.400z" fill="#2a9ae8"/><path d="M0 0l-1-6 4.400 1.600z" fill="#2a9ae8"/><path d="M0 0l6-1.600-1 4.600z" fill="#e8161e"/><path d="M0 0l3 5.600-4.400.4z" fill="#1aa84a"/><path d="M0 0l-5.600 3 1-4z" fill="#e8e000"/></g>
<g transform="translate(968.5 61.5)"><rect x="-6.400" y="-6.400" width="12.800" height="12.800" fill="#f8a028" stroke="#e8e000" stroke-width="1.100" stroke-dasharray="1.600 1"/><path d="M-4 -5l5 5-5 5M0 -5l5 5-5 5" fill="none" stroke="#f8f000" stroke-width="1.700"/></g>
<g transform="translate(968.5 79.4)"><path d="M-7 -5.400h13.400l-1.600 6h-10z" fill="#f4f4f8" stroke="#1a1a1a" stroke-width=".7"/><path d="M-5 -3.600h4M0 -3.600h4.400" stroke="#3a3ac8" stroke-width=".8"/><path d="M-4.600 -1.400h4M.4 -1.400h3.600" stroke="#e8161e" stroke-width=".8"/><circle cx=".4" cy="2" r="1.100" fill="#0a0a0a"/><path d="M-.8 3.400h2.400l.4 4h-3.200z" fill="#0a0a0a"/></g>
<g transform="translate(991.9 61.5)"><rect x="-4.800" y="-7" width="9.600" height="14" fill="#3a3aa8" stroke="#1a1a6a" stroke-width=".5"/><path d="M-4.800 -2.400h9.600M-4.800 2.400h9.600M-1.600 -7v14M1.600 -7v14" stroke="#6a6ad8" stroke-width=".4"/><path d="M1.600 -5.400l-4 5.600h2.600l-1.600 4.800 4.400-6.400h-2.600z" fill="#ffe800"/></g>
<g transform="translate(991.9 79.4)"><path d="M-4.400 1.400v-3.600c0-4 7.600-4 7.600 0v1.400" fill="none" stroke="#2a7ad8" stroke-width="1.800"/><path d="M1 -1.400l2.200 2.600 2.200-2.600z" fill="#2a7ad8"/><circle cx="-4" cy="3.600" r="2.600" fill="#ffd800" stroke="#a81a1a" stroke-width=".9"/><path d="M1.600 2c1 1.400 1.400 2 1.400 2.800a1.400 1.400 0 0 1-2.800 0c0-.8.400-1.400 1.400-2.800zM5 3c.8 1.200 1.200 1.800 1.200 2.400a1.200 1.200 0 0 1-2.400 0c0-.6.400-1.200 1.200-2.400z" fill="#e8161e"/></g>
<g transform="translate(1015.6 61.5)"><path d="M-5.600 6.400v-5l3 2v-2l3 2v-2l3 2v3z" fill="#0a0a0a"/><rect x="-5" y="-4" width="2" height="6" fill="#0a0a0a"/><rect x="-1" y="-4.400" width="6" height="4" fill="#5a5ac8"/><path d="M-4 -4.600c0-2 2-1.600 1.600-3" fill="none" stroke="#c8a800" stroke-width=".8"/></g>
<g transform="translate(1032.5 61.5)"><g stroke="#c87a00" stroke-width="1.200"><path d="M0 -7v14M-7 0h14M-5 -5l10 10M5 -5l-10 10"/></g><circle r="5" fill="#ffc800" stroke="#c87a00" stroke-width=".6"/><path d="M-4.600 -1.600h9.200c0 2-1 3-2.400 3-1.200 0-2-.6-2.200-2-.2 1.400-1 2-2.200 2-1.400 0-2.400-1-2.400-3z" fill="#0a0a0a"/></g>
<g transform="translate(1015.6 79.4)"><path d="M-6 -4.400c3-2.400 9-2.400 12 0-3 1.600-9 1.600-12 0z" fill="#0a0a0a"/><rect x="-2.400" y="-5.400" width="4.800" height="1.600" fill="#e8e8e8"/><path d="M-2 -1.600l-3.600 5h2.400l-1.600 4 4.600-5.600h-2.400l2-3.400z" fill="#c8d800" stroke="#3a3a00" stroke-width=".4"/><path d="M3.600 -.4c1.400 2 2 3 2 4a2 2 0 0 1-4 0c0-1 .6-2 2-4z" fill="#c81a1a"/></g>
<g transform="translate(1032.5 79.4)"><path d="M-6.400 -1.600l4-2.400 9 3.600-1.600 3.600-5-.6z" fill="#5a3a8a"/><circle cx="-4.400" cy="-1" r="2.600" fill="#ffc800"/><path d="M-6.400 1l5 2.400-1.400 1.600z" fill="#e8161e"/><path d="M2 1.600l4.600 1.400-1 2z" fill="#e8161e"/></g>
<g transform="translate(1057.5 61.5)"><path d="M-7 -3h9c2.400 0 3.400 1 3.400 3v1h-2.400v-.8c0-.6-.4-1-1.200-1h-8.800z" fill="#8a8a92"/><path d="M-7 -1.600h8" stroke="#2a9ae8" stroke-width="1"/><path d="M-2.400 -6.400h4.800M0 -6.400v3.400" stroke="#5a5a62" stroke-width="1.200"/><path d="M-3.600 2v3.400" stroke="#e8161e" stroke-width=".9"/><circle cx="-3.600" cy="6" r="1.100" fill="#e8161e"/><path d="M4.200 2c1 1.600 1.600 2.400 1.600 3.200a1.600 1.600 0 0 1-3.200 0c0-.8.600-1.600 1.600-3.200z" fill="#2a9ae8"/></g>
<g transform="translate(1057.5 79.4)"><path d="M-1.400 -7h2.400v2.400l2.800 1.600v9.400h-8v-9.400l2.800-1.600z" fill="#3a8ad8" stroke="#1a4a8a" stroke-width=".6"/><path d="M-2.600 -1h5v6h-5z" fill="#e8f0f8"/><path d="M0 0c1.200 1.600 1.800 2.400 1.800 3.200a1.800 1.800 0 0 1-3.600 0c0-.8.600-1.600 1.800-3.200z" fill="#e8161e"/></g>
<defs><linearGradient id="gr5" x1="0" y1="0" x2="1" y2="0"><stop offset="0" stop-color="#1a7ad8"/><stop offset=".3" stop-color="#5ac8f0"/><stop offset=".5" stop-color="#f8f0a8"/><stop offset=".75" stop-color="#f8a828"/><stop offset="1" stop-color="#e8421a"/></linearGradient></defs>
<rect x="1071.900" y="55.500" width="14.300" height="12.700" fill="url(#gr5)"/>
<g transform="translate(1095.6 61.5)"><ellipse cx="0" cy="1" rx="6" ry="5" fill="#f8e8a8" stroke="#1a7a3a" stroke-width=".8"/><path d="M-5 -.6c3 1.400 7 1.400 10 0" stroke="#e8161e" stroke-width="1.400" fill="none"/><path d="M-5 2.400c3 1.400 7 1.400 10 0" stroke="#e85aa8" stroke-width="1.200" fill="none"/><path d="M-5.600 -3.600c2-2.400 8-3 10.600-1l1.400-2" fill="none" stroke="#1a5a3a" stroke-width=".9"/><path d="M-5 4.600c3 1.600 7 1.600 10 0" fill="none" stroke="#2a5ad8" stroke-width=".8"/></g>
<g transform="translate(1078 79.4)"><rect x="-6" y="-6.400" width="3.200" height="3.200" fill="#e81a5a"/><rect x="-6" y="-3.200" width="3.200" height="3.200" fill="#f07a4a"/><rect x="-6" y="0" width="3.200" height="3.200" fill="#2a9ae8"/><rect x="-6" y="3.200" width="3.200" height="3.200" fill="#1a7ad8"/><text x="-2.800" y="6.400" font-size="11" font-weight="bold" style="font-family:&quot;Liberation Serif&quot;,serif" fill="#e8e8e8" stroke="#1a1a1a" stroke-width=".6">P</text></g>
<g transform="translate(1120 61.5)"><text x=".4" y="6" font-size="11" font-weight="bold" style="font-family:&quot;Liberation Serif&quot;,serif" fill="#e8e8e8" stroke="#1a1a1a" stroke-width=".6">P</text><circle cx="-2.600" cy="-5.600" r="1.500" fill="#0a0a0a"/><path d="M-3 -4.200c-2.400.6-3.400 2.400-3 4.200l1.400.4.200 5.600h1.400l.4-4 1.200 4h1.400l-1.200-6c.6-1.400 1.800-1.400 2.600-1.400v-1.200c-1.400 0-2.400-.6-4.400-1.600z" fill="#0a0a0a"/></g>
<g transform="translate(1137.5 61.5)"><text x=".4" y="6" font-size="11" font-weight="bold" style="font-family:&quot;Liberation Serif&quot;,serif" fill="#e8e8e8" stroke="#1a1a1a" stroke-width=".6">P</text><circle cx="-3.600" cy="-5.400" r="1.500" fill="#0a0a0a"/><path d="M-4.600 -3.800v4.600h3.400v4.600h1.400v-6h-3.200v-3.200zM-6.400 -3v5.400c0 1.600 1 2.400 2.400 2.400v1.200h1v-2.400h-1.400c-.6 0-.8-.4-.8-1.200v-5.400z" fill="#0a0a0a"/></g>
<g transform="translate(1120 79.4)"><circle cx="-5.400" cy="-4.600" r="1.700" fill="none" stroke="#e81a8a" stroke-width=".8"/><path d="M-5.400 -3v3M-6.800 -1.400h2.800" stroke="#e81a8a" stroke-width=".7"/><circle cx="-5.400" cy="4.600" r="1.700" fill="none" stroke="#1a1a1a" stroke-width=".7"/><circle cx=".4" cy="-5" r="1.600" fill="#0a0a0a"/><path d="M-2.600 -3h6v5h-1.200v5h-1.400v-4.400h-.8v4.400h-1.400v-5h-1.200z" fill="#0a0a0a"/><path d="M-1.400 -2.800h3.600v4h-3.600z" fill="#2ab8e8"/><path d="M5.600 -6.400v13M4.400 -6.400h2.400M4.400 6.600h2.400" stroke="#1a1a1a" stroke-width=".7"/></g>
<g transform="translate(1137.5 79.4)"><g stroke="#1a1a1a" stroke-width=".9" stroke-dasharray="1 .600"><path d="M5.2 0L7 0"/><path d="M4.5 2.6L6.06 3.5"/><path d="M2.6 4.5L3.5 6.06"/><path d="M0 5.2L0 7"/><path d="M-2.6 4.5L-3.5 6.06"/><path d="M-4.5 2.6L-6.06 3.5"/><path d="M-5.2 0L-7 0"/><path d="M-4.5 -2.6L-6.06 -3.5"/><path d="M-2.6 -4.5L-3.5 -6.06"/><path d="M-0 -5.2L-0 -7"/><path d="M2.6 -4.5L3.5 -6.06"/><path d="M4.5 -2.6L6.06 -3.5"/></g><circle r="4.400" fill="#e8161e"/></g>
<g transform="translate(1160 61.5)"><circle cx="-.6" cy=".8" r="5.800" fill="#f8f8f8" stroke="#0a0a0a" stroke-width="1.100"/><path d="M-.6 .8l5-5" stroke="#e8161e" stroke-width="1.400"/><path d="M1 -7h5.400v5.400z" fill="#e8161e"/><path d="M-3.600 -5.600l-2-1.400M-3 2l1.400.6M.4 3.400l1 1" stroke="#8a8a8a" stroke-width=".5"/></g>
<g transform="translate(1160 79.4)"><circle cx="-.4" cy=".8" r="5.800" fill="#e88a3a" stroke="#0a0a0a" stroke-width="1.100"/><path d="M-5.400 -1c2-2 8-2 10 0" fill="#f8f8f8"/><path d="M-3.600 -5.400l-2-1.400" stroke="#0a0a0a" stroke-width=".9"/><path d="M-4 3l3-3 2 2 3-3" fill="none" stroke="#f8d8a8" stroke-width=".7"/></g>
<g style="font-family:&quot;Liberation Serif&quot;,serif" font-weight="bold" fill="#0a0a0a" font-size="7.600"><text x="1176.400" y="61.600">I</text><text x="1176" y="69.300" textLength="13" lengthAdjust="spacingAndGlyphs">NY</text></g>
<circle cx="1184.400" cy="57.600" r="2.300" fill="#fff" stroke="#e8161e" stroke-width=".9"/><path d="M1186 59.400l2.400 2.600" stroke="#e8161e" stroke-width="1"/>
<circle cx="1181.400" cy="77.600" r="4.300" fill="none" stroke="#0a0a0a" stroke-width="1.500"/><path d="M1184.600 81l4.200 4.600" stroke="#0a0a0a" stroke-width="2" stroke-linecap="round"/>
<path d="M604 121.200v-12.400h4.600l1.400 1.600h4.600v10.800z" fill="#f2f2ea" stroke="#9a9a8a" stroke-width=".6"/><path d="M604 121.200l1.600-8.800h11.200l-1.200 8.800z" fill="#6cbf4a" stroke="#3f8a2c" stroke-width=".6"/><path d="M606 113h10.200l-.3 2.200h-10.300z" fill="#a4dd86"/>
<rect x="622.200" y="108" width="14.200" height="13.500" rx="1.200" fill="#2a5ad8" stroke="#1a2a8a" stroke-width=".6"/><rect x="625" y="108.600" width="8.600" height="4.600" fill="#e8e8ee"/><rect x="625" y="115.400" width="8.600" height="6" fill="#8aa8e8"/><rect x="630" y="116.400" width="2.600" height="4" fill="#e8e8ee"/><path d="M625 110h8.600M625 111.400h8.600" stroke="#a8a8b0" stroke-width=".4"/>
<path d="M641.500 108v14" stroke="#c4c4c8" stroke-width=".7"/>
<rect x="644.300" y="108.200" width="85.200" height="14.300" fill="#fff" stroke="#8a8a8a" stroke-width=".7"/><path d="M721.200 114.300l2.800 2.800 2.800-2.800" fill="none" stroke="#3a3a3a" stroke-width=".8"/>
<g fill="#0a0a0a"><path d="M733 108.200h5.200v2.400h-2.800v2.800h-2.400zM746.700 108.200v5.200h-2.400v-2.800h-2.800v-2.400zM733 121.600v-5.200h2.400v2.800h2.800v2.400zM746.700 121.600h-5.200v-2.400h2.800v-2.800h2.400z"/><rect x="738" y="113.200" width="3.700" height="3.700"/></g><rect x="739.200" y="114.400" width="1.300" height="1.300" fill="#fff"/>
<path d="M751.300 114.200h3l-1.500 1.800zM777.400 114.200h3l-1.500 1.800z" fill="#1a1a1a"/>
<path d="M759.600 115c3.400-5 10.300-5 13.700 0-3.400 5-10.300 5-13.700 0z" fill="#f4f4f4" stroke="#1a7a9a" stroke-width="1"/><circle cx="766.400" cy="115" r="3.200" fill="#2aa8d8" stroke="#0a4a6a" stroke-width=".6"/><circle cx="766.400" cy="115" r="1.400" fill="#0a0a0a"/>
<path d="M790.600 119.200l5.800-9.400 2.200 1.400-5.800 9.400z" fill="#d81a1a"/><path d="M796.400 109.800l2.200 1.400.4-2.200z" fill="#f8c8a8"/><path d="M786 118.400c.4 2.400 2.400 3.400 4 2.600 1.400-.6 1-2.400-.4-2.400-1.200 0-1.400 1.400-.4 1.800" fill="none" stroke="#1a1a1a" stroke-width=".9"/>
<path d="M1076 112.600l4.400-4.400 5.400 3.400-1 5-5 2.400z" fill="#eeeeee" stroke="#6a6a6a" stroke-width=".7"/><ellipse cx="1081" cy="118.600" rx="5" ry="2.400" fill="#1a1a1a"/>
<g fill="none" stroke="#4a4a4a" stroke-width=".7"><path d="M1092.400 114.400l6-5.400c2-1.400 6.400 1 6 3.400l-1.600 6c-.6 2-5 3-7 1z"/><ellipse cx="1101" cy="112" rx="3.400" ry="2" transform="rotate(30 1101 112)"/><path d="M1095 116.600l2 1.600M1097.600 114.600l2 1.600"/></g>
<rect x="1109" y="105.900" width="16.900" height="17.500" fill="#e6f1fb" stroke="#3a9ad8" stroke-width=".8"/><path d="M1111 113l5.400-4.600c2-1.600 7.600 1 7 4l-1.400 5.400c-.8 2.400-6 3.600-8.400 1.600-2-1.600-3-4.400-2.600-6.400z" fill="#c81a1a"/><path d="M1116.400 108.400c2-1.600 7.600 1 7 4" fill="none" stroke="#f05a5a" stroke-width="1"/><path d="M1111.600 116c1 2.600 4 4 6 3.600" stroke="#7a0a0a" stroke-width="1" fill="none"/>
<path d="M1131.400 108v14M1173.200 108v14" stroke="#c4c4c8" stroke-width=".7"/>
<rect x="1136" y="105.900" width="17.700" height="17.500" fill="#e6f1fb" stroke="#3a9ad8" stroke-width=".8"/><path d="M1138.600 114.400l5-4.600c2-1.600 7.600 1 7 4l-1.400 5c-.8 2.400-6 3.600-8.400 1.600-2-1.600-2.600-4-2.200-6z" fill="#e4e4e4" stroke="#6a6a6a" stroke-width=".5"/><path d="M1141.400 111.600l2.600-2.400c2-1.400 7.200 1 6.600 4l-1 4.400z" fill="#2a9a2a"/><ellipse cx="1147" cy="111.400" rx="2.600" ry="1.600" fill="#8ae06a" transform="rotate(30 1147 111.400)"/><path d="M1139.400 110l11 10.400" stroke="#3a3a3a" stroke-width=".8"/>
<defs><radialGradient id="os" cx=".4" cy=".35" r=".7"><stop offset="0" stop-color="#ffd0a0"/><stop offset=".5" stop-color="#e8681a"/><stop offset="1" stop-color="#8a2a0a"/></radialGradient><radialGradient id="ws" cx=".5" cy=".35" r=".7"><stop offset="0" stop-color="#ffffff"/><stop offset=".6" stop-color="#e4e4e4"/><stop offset="1" stop-color="#9a9a9a"/></radialGradient></defs>
<circle cx="1162.400" cy="114.800" r="6.600" fill="url(#ws)"/><path d="M1162.400 108.200a6.600 6.600 0 0 0 0 13.200z" fill="url(#os)"/>
<path d="M1183.700 108.600l4.600 2.200 1.200 5-3.200 4h-5.200l-3.200-4 1.200-5z" fill="#6ab4f4" stroke="#1a3a9a" stroke-width="1"/><ellipse cx="1182.600" cy="112.600" rx="2.600" ry="1.800" fill="#c4e4ff"/><path d="M1192.600 114.600h3l-1.500 1.800z" fill="#1a1a1a"/>
</svg>
<div class="t" style="left:3.5px;top:239px;font-size:4.7px;color:#1a1a1a;font-weight:bold;letter-spacing:-0.195px;">Partition List</div>
<div class="t" style="left:94.4px;top:235px;font-size:4.7px;color:#1a1a1a;font-weight:bold;letter-spacing:-0.258px;">Tree Statistics</div>
<div class="t" style="left:182.55px;top:221px;font-size:4.7px;color:#1a1a1a;font-weight:bold;letter-spacing:-0.279px;">Replace Paths</div>
<div class="t" style="left:257.65px;top:216px;font-size:4.7px;color:#1a1a1a;font-weight:bold;letter-spacing:-0.230px;">Explode Tree</div>
<div class="t" style="left:132.15px;top:294px;font-size:4.7px;color:#1a1a1a;font-weight:bold;letter-spacing:-0.166px;">Jitter</div>
<div class="t" style="left:5.2px;top:259px;font-size:4.8px;color:#585870;letter-spacing:-0.279px;">Chunks</div>
<div class="t" style="left:89.8px;top:259px;font-size:4.8px;color:#707070;letter-spacing:-0.523px;">Tree</div>
<div class="t" style="left:112px;top:250px;font-size:4.8px;color:#707070;letter-spacing:-0.355px;">Paths</div>
<div class="t" style="left:112px;top:259px;font-size:4.8px;color:#707070;letter-spacing:-0.197px;">Length</div>
<div class="t" style="left:112px;top:267px;font-size:4.8px;color:#707070;letter-spacing:-0.262px;">Count</div>
<div class="t" style="left:183px;top:237px;font-size:4.8px;color:#707070;letter-spacing:-0.335px;">Data</div>
<div class="t" style="left:178.4px;top:245px;font-size:4.8px;color:#707070;letter-spacing:-0.301px;">Search</div>
<div class="t" style="left:176.7px;top:253px;font-size:4.8px;color:#707070;letter-spacing:-0.359px;">Replace</div>
<div class="t" style="left:206.4px;top:245px;font-size:4.8px;color:#707070;letter-spacing:-0.210px;">Data</div>
<div class="t" style="left:255.4px;top:244px;font-size:4.8px;color:#707070;letter-spacing:-0.210px;">Data</div>
<div class="t" style="left:279.3px;top:231px;font-size:4.8px;color:#707070;letter-spacing:-0.525px;">{0}</div>
<div class="t" style="left:279.3px;top:240px;font-size:4.8px;color:#707070;letter-spacing:-0.525px;">{1}</div>
<div class="t" style="left:279.3px;top:248px;font-size:4.8px;color:#707070;letter-spacing:-0.525px;">{2}</div>
<div class="t" style="left:279.3px;top:257px;font-size:4.8px;color:#707070;letter-spacing:-0.525px;">{3}</div>
<div class="t" style="left:121px;top:309px;font-size:4.8px;color:#707070;letter-spacing:-0.367px;">List</div>
<div class="t" style="left:117.7px;top:318px;font-size:4.8px;color:#707070;letter-spacing:-0.184px;">Jitter</div>
<div class="t" style="left:118.5px;top:326px;font-size:4.8px;color:#707070;letter-spacing:-0.678px;">Seed</div>
<div class="t" style="left:141px;top:311px;font-size:4.8px;color:#707070;letter-spacing:-0.170px;">Values</div>
<div class="t" style="left:141.5px;top:324px;font-size:4.8px;color:#707070;letter-spacing:-0.173px;">Indices</div>
<div class="t" style="left:128px;top:128px;font-size:4.6px;color:#aaa44a;letter-spacing:0.356px;">{0}</div>
<div class="t" style="left:76.2px;top:135px;font-size:4.6px;color:#aaa44a;">0</div>
<div class="t" style="left:81.2px;top:135px;font-size:4.6px;color:#aaa44a;letter-spacing:-0.058px;">3000</div>
<div class="t" style="left:76.2px;top:142px;font-size:4.6px;color:#aaa44a;">1</div>
<div class="t" style="left:81.2px;top:142px;font-size:4.6px;color:#aaa44a;letter-spacing:-0.058px;">5000</div>
<div class="t" style="left:128px;top:150px;font-size:4.6px;color:#aaa44a;letter-spacing:0.356px;">{1}</div>
<div class="t" style="left:76.2px;top:157px;font-size:4.6px;color:#aaa44a;">0</div>
<div class="t" style="left:81.2px;top:157px;font-size:4.6px;color:#aaa44a;letter-spacing:-0.058px;">4000</div>
<div class="t" style="left:76.2px;top:164px;font-size:4.6px;color:#aaa44a;">1</div>
<div class="t" style="left:81.2px;top:164px;font-size:4.6px;color:#aaa44a;letter-spacing:-0.058px;">6000</div>
<div class="t" style="left:128px;top:171px;font-size:4.6px;color:#aaa44a;letter-spacing:0.356px;">{2}</div>
<div class="t" style="left:76.2px;top:178px;font-size:4.6px;color:#aaa44a;">0</div>
<div class="t" style="left:81.2px;top:178px;font-size:4.6px;color:#aaa44a;letter-spacing:-0.058px;">3000</div>
<div class="t" style="left:76.2px;top:185px;font-size:4.6px;color:#aaa44a;">1</div>
<div class="t" style="left:81.2px;top:185px;font-size:4.6px;color:#aaa44a;letter-spacing:-0.058px;">5000</div>
<div class="t" style="left:128px;top:193px;font-size:4.6px;color:#aaa44a;letter-spacing:0.356px;">{3}</div>
<div class="t" style="left:76.2px;top:200px;font-size:4.6px;color:#aaa44a;">0</div>
<div class="t" style="left:81.2px;top:200px;font-size:4.6px;color:#aaa44a;letter-spacing:-0.058px;">5000</div>
<div class="t" style="left:76.2px;top:206px;font-size:4.6px;color:#aaa44a;">1</div>
<div class="t" style="left:81.2px;top:206px;font-size:4.6px;color:#aaa44a;letter-spacing:-0.058px;">5000</div>
<div class="t" style="left:324.3px;top:129px;font-size:4.6px;color:#aaa44a;">1</div>
<div class="t" style="left:329.5px;top:129px;font-size:4.6px;color:#aaa44a;letter-spacing:-0.058px;">5000</div>
<div class="t" style="left:82.3px;top:292px;font-size:4.6px;color:#aaa44a;letter-spacing:0.356px;">{0}</div>
<div class="t" style="left:26.3px;top:299px;font-size:4.6px;color:#aaa44a;">0</div>
<div class="t" style="left:31px;top:299px;font-size:4.6px;color:#aaa44a;">3</div>
<div class="t" style="left:26.3px;top:306px;font-size:4.6px;color:#aaa44a;">1</div>
<div class="t" style="left:31px;top:306px;font-size:4.6px;color:#aaa44a;">0</div>
<div class="t" style="left:26.3px;top:312px;font-size:4.6px;color:#aaa44a;">2</div>
<div class="t" style="left:31px;top:312px;font-size:4.6px;color:#aaa44a;">2</div>
<div class="t" style="left:26.3px;top:319px;font-size:4.6px;color:#aaa44a;">3</div>
<div class="t" style="left:31px;top:319px;font-size:4.6px;color:#aaa44a;">1</div>
<div class="t" style="left:229px;top:294px;font-size:4.6px;color:#aaa44a;letter-spacing:0.407px;">{0;0}</div>
<div class="t" style="left:182.6px;top:302px;font-size:4.6px;color:#aaa44a;">0</div>
<div class="t" style="left:187.3px;top:302px;font-size:4.6px;color:#aaa44a;">2</div>
<div class="t" style="left:182.6px;top:308px;font-size:4.6px;color:#aaa44a;">1</div>
<div class="t" style="left:187.3px;top:308px;font-size:4.6px;color:#aaa44a;">3</div>
<div class="t" style="left:182.6px;top:314px;font-size:4.6px;color:#aaa44a;">2</div>
<div class="t" style="left:187.3px;top:314px;font-size:4.6px;color:#aaa44a;">3</div>
<div class="t" style="left:182.6px;top:321px;font-size:4.6px;color:#aaa44a;">3</div>
<div class="t" style="left:187.3px;top:321px;font-size:4.6px;color:#aaa44a;">0</div>
<div class="t" style="left:24.55px;top:89px;font-size:7.2px;color:#f4f4f4;letter-spacing:-0.291px;">0 | Ladybug</div>
<div class="t" style="left:105px;top:89px;font-size:7.2px;color:#f4f4f4;letter-spacing:-0.336px;">1 | AnalyzeWeatherData</div>
<div class="t" style="left:204px;top:89px;font-size:7.2px;color:#f4f4f4;letter-spacing:-0.327px;">2 | VisualizeWeatherData</div>
<div class="t" style="left:299.5px;top:89px;font-size:7.2px;color:#f4f4f4;letter-spacing:-0.348px;">3 | EnvironmentalAnalysis</div>
<div class="t" style="left:398.7px;top:89px;font-size:7.2px;color:#f4f4f4;letter-spacing:-0.321px;">4 | Renewables</div>
<div class="t" style="left:493px;top:89px;font-size:7.2px;color:#f4f4f4;letter-spacing:-0.298px;">5 | Extra</div>
<div class="t" style="left:552.15px;top:90px;font-size:6.6px;color:#f4f4f4;letter-spacing:-0.352px;">6 | D...</div>
<div class="t" style="left:577.5px;top:90px;font-size:6.6px;color:#f4f4f4;letter-spacing:-0.508px;">7 | ...</div>
<div class="t" style="left:46.4px;top:112px;font-size:7.6px;color:#111;letter-spacing:-0.737px;">67%</div>
<div class="t" style="left:21.6px;top:646px;font-size:4.2px;color:#111;font-weight:bold;letter-spacing:-0.070px;">X Y Z</div>
<svg width="600" height="675" viewBox="600 0 600 675" style="left:0;top:0;z-index:5;"><path d="M881.2 254.8v10.4l2.4-2.2 1.9 4.2 1.7-.8-1.9-4.1 3.3-.2z" fill="#fff" stroke="#1a1a1a" stroke-width=".7" stroke-linejoin="round"/></svg>
<div class="a" style="left:0px;top:0px;width:0.9px;height:675px;background:#6e6e6e;"></div>
<div class="a" style="left:0px;top:674px;width:600px;height:1px;background:#8a8a8a;"></div>
</div>
</body></html>
